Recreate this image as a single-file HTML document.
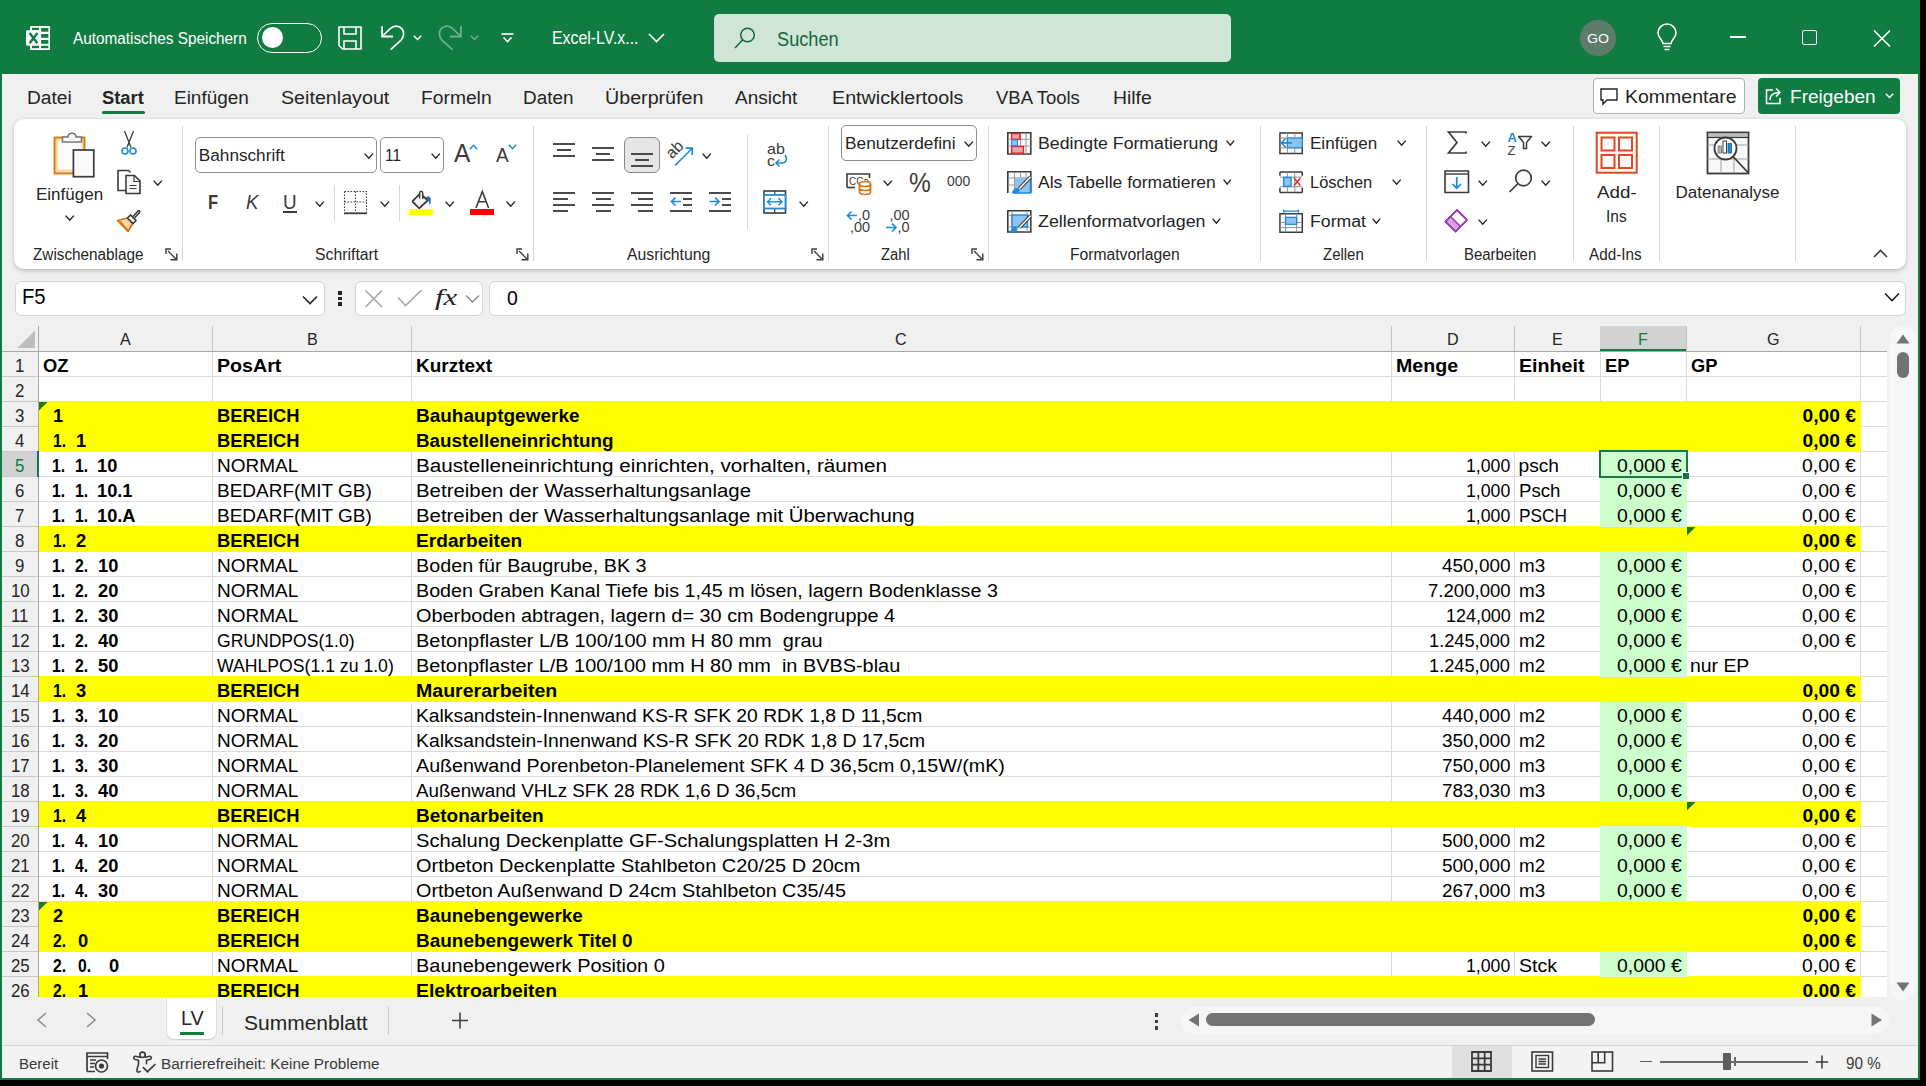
<!DOCTYPE html>
<html><head><meta charset="utf-8"><style>
html,body{margin:0;padding:0;}
body{width:1926px;height:1086px;position:relative;overflow:hidden;background:#000;font-family:"Liberation Sans",sans-serif;}
.t{position:absolute;line-height:1;white-space:pre;transform-origin:0 0;}
.a{position:absolute;}
svg{position:absolute;overflow:visible;}
</style></head><body>
<div class="a" style="left:0;top:0;width:1920px;height:1080px;background:#107C41"></div>
<div class="a" style="left:2px;top:74px;width:1916px;height:1004px;background:#F0F0F0"></div>
<svg style="left:25px;top:25px" width="26" height="26" viewBox="0 0 26 26">
<rect x="5" y="1" width="20" height="24" rx="1" fill="#fff"/>
<rect x="1" y="5.2" width="14.5" height="15.5" rx="1.2" fill="#fff"/>
<rect x="16.1" y="3" width="7.3" height="3.7" fill="#107C41"/><rect x="16.1" y="9" width="7.3" height="3.8" fill="#107C41"/>
<rect x="16.1" y="15" width="7.3" height="3.8" fill="#107C41"/><rect x="16.1" y="20.8" width="7.3" height="2.4" fill="#107C41"/>
<rect x="7" y="2.8" width="7" height="2.2" fill="#107C41"/><rect x="7" y="20.8" width="7" height="2.4" fill="#107C41"/>
<path d="M4.6 8l7.8 10.2M12.4 8L4.6 18.2" stroke="#107C41" stroke-width="2.4"/>
</svg>
<div class="t" style="left:73.30px;top:31.09px;font-size:15.6px;color:#fff;transform:scaleX(0.9823);">Automatisches Speichern</div>
<div class="a" style="left:257px;top:23px;width:63px;height:28px;border:1.2px solid #fff;border-radius:16px;box-sizing:content-box"></div>
<div class="a" style="left:262px;top:27px;width:21px;height:21px;border-radius:50%;background:#fff"></div>
<svg style="left:338px;top:26px" width="24" height="24" viewBox="0 0 24 24">
<path d="M1 1h22v22H4.5L1 19.5z" fill="none" stroke="#fff" stroke-width="1.6"/>
<path d="M6 1v7h12V1" fill="none" stroke="#fff" stroke-width="1.6"/>
<path d="M6 23v-8h12v8" fill="none" stroke="#fff" stroke-width="1.6"/>
</svg>
<svg style="left:381px;top:25px" width="24" height="26" viewBox="0 0 24 26">
<path d="M1.1 1.2v10.3H12" fill="none" stroke="#fff" stroke-width="1.8"/>
<path d="M2 10.5L9.6 3.4C12.5 0.6 17.5 0.2 20.8 3.6C23.5 6.5 23.3 12 19.8 15.4L9.6 24.7" fill="none" stroke="#fff" stroke-width="1.7"/>
</svg>
<svg style="left:413px;top:35px" width="9" height="6" viewBox="0 0 9 6"><path d="M0.8 0.8l3.7 3.7 3.7-3.7" fill="none" stroke="#fff" stroke-width="1.5"/></svg>
<svg style="left:438px;top:25px" width="24" height="26" viewBox="0 0 24 26" opacity="0.4">
<path d="M22.9 1.2v10.3H12" fill="none" stroke="#fff" stroke-width="1.8"/>
<path d="M22 10.5L14.4 3.4C11.5 0.6 6.5 0.2 3.2 3.6C0.5 6.5 0.7 12 4.2 15.4L14.4 24.7" fill="none" stroke="#fff" stroke-width="1.7"/>
</svg>
<svg style="left:470px;top:35px" width="9" height="6" viewBox="0 0 9 6" opacity="0.4"><path d="M0.8 0.8l3.7 3.7 3.7-3.7" fill="none" stroke="#fff" stroke-width="1.5"/></svg>
<svg style="left:501px;top:33px" width="13" height="11" viewBox="0 0 13 11"><path d="M0.5 1h12" stroke="#fff" stroke-width="1.6"/><path d="M2.5 4.5l4 4 4-4" fill="none" stroke="#fff" stroke-width="1.6"/></svg>
<div class="t" style="left:552.00px;top:30.23px;font-size:17.8px;color:#fff;transform:scaleX(0.8931);">Excel-LV.x...</div>
<svg style="left:648px;top:33px" width="17" height="10" viewBox="0 0 17 10"><path d="M1 1l7.5 7.5L16 1" fill="none" stroke="#fff" stroke-width="1.7"/></svg>
<div class="a" style="left:714px;top:14px;width:517px;height:48px;border-radius:5px;background:#D0E4D8"></div>
<svg style="left:734px;top:27px" width="22" height="22" viewBox="0 0 22 22"><circle cx="13.5" cy="8" r="6.8" fill="none" stroke="#13683A" stroke-width="1.5"/><path d="M8.7 12.8L1 21" stroke="#13683A" stroke-width="1.5"/></svg>
<div class="t" style="left:776.60px;top:29.69px;font-size:19.5px;color:#13683A;transform:scaleX(0.9329);">Suchen</div>
<div class="a" style="left:1580px;top:20px;width:36px;height:36px;border-radius:50%;background:#5E7C6A"></div>
<div class="t" style="left:1587.00px;top:32.07px;font-size:13.5px;color:#fff;transform:scaleX(1.0475);">GO</div>
<svg style="left:1657px;top:25px" width="20" height="26" viewBox="0 0 20 26">
<path d="M6 18.5c0-3-5-5.5-5-10.5a9 9 0 0 1 18 0c0 5-5 7.5-5 10.5z" fill="none" stroke="#fff" stroke-width="1.6"/>
<path d="M6.5 21.5h7M7.5 24.5h5" stroke="#fff" stroke-width="1.6"/>
</svg>
<div class="a" style="left:1730px;top:36px;width:16px;height:2px;background:#fff"></div>
<div class="a" style="left:1802px;top:30px;width:13px;height:13px;border:1.6px solid #fff;border-radius:2px"></div>
<svg style="left:1873px;top:30px" width="18" height="17" viewBox="0 0 18 17"><path d="M1 0.5l16 16M17 0.5l-16 16" stroke="#fff" stroke-width="1.6"/></svg>
<div class="t" style="left:26.70px;top:89.39px;font-size:18.8px;color:#242424;transform:scaleX(1.0218);">Datei</div>
<div class="t" style="left:102.20px;top:89.39px;font-size:18.8px;color:#242424;font-weight:bold;transform:scaleX(0.9769);">Start</div>
<div class="t" style="left:173.70px;top:89.39px;font-size:18.8px;color:#242424;transform:scaleX(1.0089);">Einfügen</div>
<div class="t" style="left:281.00px;top:89.39px;font-size:18.8px;color:#242424;transform:scaleX(1.0477);">Seitenlayout</div>
<div class="t" style="left:420.80px;top:89.39px;font-size:18.8px;color:#242424;transform:scaleX(1.0250);">Formeln</div>
<div class="t" style="left:523.00px;top:89.39px;font-size:18.8px;color:#242424;transform:scaleX(1.0056);">Daten</div>
<div class="t" style="left:605.20px;top:89.39px;font-size:18.8px;color:#242424;transform:scaleX(1.0472);">Überprüfen</div>
<div class="t" style="left:735.40px;top:89.39px;font-size:18.8px;color:#242424;transform:scaleX(1.0115);">Ansicht</div>
<div class="t" style="left:831.60px;top:89.39px;font-size:18.8px;color:#242424;transform:scaleX(1.0491);">Entwicklertools</div>
<div class="t" style="left:995.60px;top:89.39px;font-size:18.8px;color:#242424;transform:scaleX(0.9834);">VBA Tools</div>
<div class="t" style="left:1112.60px;top:89.39px;font-size:18.8px;color:#242424;transform:scaleX(1.0327);">Hilfe</div>
<div class="a" style="left:102px;top:111px;width:43px;height:3px;border-radius:2px;background:#107C41"></div>
<div class="a" style="left:1593px;top:78px;width:150px;height:34px;border:1px solid #B0B0B0;border-radius:4px;background:#fff"></div>
<svg style="left:1600px;top:88px" width="18" height="18" viewBox="0 0 18 18"><path d="M1 1h16v11H7l-4 4v-4H1z" fill="none" stroke="#242424" stroke-width="1.4"/></svg>
<div class="t" style="left:1625.00px;top:87.94px;font-size:18.5px;color:#242424;transform:scaleX(1.0547);">Kommentare</div>
<div class="a" style="left:1758px;top:78px;width:142px;height:36px;border-radius:4px;background:#107C41"></div>
<svg style="left:1765px;top:87px" width="18" height="18" viewBox="0 0 18 18">
<path d="M8 3H1.5v13.5H15V11" fill="none" stroke="#fff" stroke-width="1.5"/>
<path d="M5 13c0-5 4-7.5 9-7.5M11 1.5l4 4-4 4" fill="none" stroke="#fff" stroke-width="1.5"/>
</svg>
<div class="t" style="left:1789.80px;top:87.94px;font-size:18.5px;color:#fff;transform:scaleX(1.0288);">Freigeben</div>
<svg style="left:1885px;top:93px" width="9" height="6" viewBox="0 0 9 6"><path d="M0.8 0.8l3.7 3.7 3.7-3.7" fill="none" stroke="#fff" stroke-width="1.5"/></svg>
<div class="a" style="left:14px;top:119px;width:1892px;height:150px;border-radius:10px;background:#fff;box-shadow:0 1.5px 4px rgba(0,0,0,0.2)"></div>
<div class="t" style="left:33.30px;top:246.66px;font-size:16px;color:#262626;transform:scaleX(0.9557);">Zwischenablage</div>
<div class="t" style="left:314.60px;top:246.66px;font-size:16px;color:#262626;transform:scaleX(0.9873);">Schriftart</div>
<div class="t" style="left:627.40px;top:246.66px;font-size:16px;color:#262626;transform:scaleX(0.9859);">Ausrichtung</div>
<div class="t" style="left:881.40px;top:246.66px;font-size:16px;color:#262626;transform:scaleX(0.9221);">Zahl</div>
<div class="t" style="left:1069.60px;top:246.66px;font-size:16px;color:#262626;transform:scaleX(0.9791);">Formatvorlagen</div>
<div class="t" style="left:1322.50px;top:246.66px;font-size:16px;color:#262626;transform:scaleX(0.9340);">Zellen</div>
<div class="t" style="left:1464.00px;top:246.66px;font-size:16px;color:#262626;transform:scaleX(0.9329);">Bearbeiten</div>
<div class="t" style="left:1589.40px;top:246.66px;font-size:16px;color:#262626;transform:scaleX(0.9539);">Add-Ins</div>
<svg style="left:165px;top:248px" width="13" height="13" viewBox="0 0 13 13"><path d="M1 6V1h5" fill="none" stroke="#3B3B3B" stroke-width="1.4"/><path d="M3 3l8.5 8.5M5.5 11.8h6.3V5.5" fill="none" stroke="#3B3B3B" stroke-width="1.4"/></svg>
<svg style="left:516px;top:248px" width="13" height="13" viewBox="0 0 13 13"><path d="M1 6V1h5" fill="none" stroke="#3B3B3B" stroke-width="1.4"/><path d="M3 3l8.5 8.5M5.5 11.8h6.3V5.5" fill="none" stroke="#3B3B3B" stroke-width="1.4"/></svg>
<svg style="left:811px;top:248px" width="13" height="13" viewBox="0 0 13 13"><path d="M1 6V1h5" fill="none" stroke="#3B3B3B" stroke-width="1.4"/><path d="M3 3l8.5 8.5M5.5 11.8h6.3V5.5" fill="none" stroke="#3B3B3B" stroke-width="1.4"/></svg>
<svg style="left:971px;top:248px" width="13" height="13" viewBox="0 0 13 13"><path d="M1 6V1h5" fill="none" stroke="#3B3B3B" stroke-width="1.4"/><path d="M3 3l8.5 8.5M5.5 11.8h6.3V5.5" fill="none" stroke="#3B3B3B" stroke-width="1.4"/></svg>
<div class="a" style="left:182px;top:126px;width:1px;height:135px;background:#D6D6D6"></div>
<div class="a" style="left:533px;top:126px;width:1px;height:135px;background:#D6D6D6"></div>
<div class="a" style="left:828px;top:126px;width:1px;height:135px;background:#D6D6D6"></div>
<div class="a" style="left:988px;top:126px;width:1px;height:135px;background:#D6D6D6"></div>
<div class="a" style="left:1260px;top:126px;width:1px;height:135px;background:#D6D6D6"></div>
<div class="a" style="left:1426px;top:126px;width:1px;height:135px;background:#D6D6D6"></div>
<div class="a" style="left:1573px;top:126px;width:1px;height:135px;background:#D6D6D6"></div>
<div class="a" style="left:1659px;top:126px;width:1px;height:135px;background:#D6D6D6"></div>
<div class="a" style="left:1795px;top:126px;width:1px;height:135px;background:#D6D6D6"></div>
<div class="a" style="left:334px;top:185px;width:1px;height:36px;background:#D6D6D6"></div>
<div class="a" style="left:399px;top:185px;width:1px;height:36px;background:#D6D6D6"></div>
<div class="a" style="left:747px;top:135px;width:1px;height:94px;background:#D6D6D6"></div>
<svg style="left:50px;top:130px" width="48" height="50" viewBox="0 0 48 50">
<rect x="4.5" y="7.5" width="30" height="36" fill="#F8D9A0" stroke="#D9730D" stroke-width="1.8"/>
<rect x="8" y="10.5" width="23.5" height="29" fill="#FBFBFB"/>
<path d="M12.5 12V7h5.5c0-5 8-5 8 0h5.5v5z" fill="#F7F7F7" stroke="#7A7A7A" stroke-width="1.6"/>
<rect x="23.4" y="20" width="20.4" height="26.7" fill="#FAFAFA" stroke="#3B3B3B" stroke-width="1.7"/>
</svg>
<div class="t" style="left:36.00px;top:186.41px;font-size:17px;color:#242424;">Einfügen</div>
<svg style="left:65.0px;top:214.5px" width="9.5" height="6.0" viewBox="0 0 9.5 6.0"><path d="M0.6 0.6L4.75 5.20L8.90 0.6" fill="none" stroke="#242424" stroke-width="1.4"/></svg>
<svg style="left:120px;top:130px" width="18" height="26" viewBox="0 0 18 26">
<path d="M4.5 1L11 17.5M13.5 1L7 17.5" stroke="#3B3B3B" stroke-width="1.3"/>
<circle cx="5" cy="21" r="3" fill="none" stroke="#1E8BDB" stroke-width="1.6"/><circle cx="13" cy="21" r="3" fill="none" stroke="#1E8BDB" stroke-width="1.6"/>
</svg>
<svg style="left:116px;top:169px" width="26" height="26" viewBox="0 0 26 26">
<path d="M10 21.5H2V1.5h10.5l2 2" fill="none" stroke="#3B3B3B" stroke-width="1.6"/>
<path d="M10 6.5h8.5l5.5 5.5v12.5H10z" fill="#FAFAFA" stroke="#3B3B3B" stroke-width="1.6"/>
<path d="M18 6.5v6h6M13.5 16.5h7M13.5 19.5h7" fill="none" stroke="#3B3B3B" stroke-width="1.2"/>
</svg>
<svg style="left:153.0px;top:179.5px" width="9.5" height="6.0" viewBox="0 0 9.5 6.0"><path d="M0.6 0.6L4.75 5.20L8.90 0.6" fill="none" stroke="#242424" stroke-width="1.4"/></svg>
<svg style="left:116px;top:208px" width="26" height="25" viewBox="0 0 26 25">
<path d="M1.5 12.5l10-2.5 5 5.5-4.5 8z" fill="#F9D7A6" stroke="#D9730D" stroke-width="1.7" stroke-linejoin="round"/>
<path d="M4 13.5l8 9" stroke="#D9730D" stroke-width="1.4"/>
<path d="M11.5 10l3-3 5.5 5.5-3 3z" fill="#fff" stroke="#3B3B3B" stroke-width="1.6"/>
<path d="M17 8.5l5-5.5c1-1 2.5 0.5 1.5 1.5l-5 5.5" fill="#fff" stroke="#3B3B3B" stroke-width="1.6"/>
</svg>
<div class="a" style="left:195px;top:137px;width:180px;height:34px;border:1px solid #8F8F8F;border-radius:5px;background:#fff"></div>
<div class="t" style="left:198.80px;top:147.24px;font-size:17.2px;color:#242424;">Bahnschrift</div>
<svg style="left:364.0px;top:152.5px" width="9.5" height="6.0" viewBox="0 0 9.5 6.0"><path d="M0.6 0.6L4.75 5.20L8.90 0.6" fill="none" stroke="#242424" stroke-width="1.4"/></svg>
<div class="a" style="left:380px;top:137px;width:62px;height:34px;border:1px solid #8F8F8F;border-radius:5px;background:#fff"></div>
<div class="t" style="left:384.70px;top:147.24px;font-size:17.2px;color:#242424;transform:scaleX(0.8912);">11</div>
<svg style="left:431.0px;top:152.5px" width="9.5" height="6.0" viewBox="0 0 9.5 6.0"><path d="M0.6 0.6L4.75 5.20L8.90 0.6" fill="none" stroke="#242424" stroke-width="1.4"/></svg>
<div class="t" style="left:454.40px;top:140.49px;font-size:26px;color:#3B3B3B;transform:scaleX(0.9399);">A</div>
<svg style="left:469px;top:144px" width="9" height="6" viewBox="0 0 9 6"><path d="M0.8 5.2L4.5 1.3l3.7 3.9" fill="none" stroke="#1E8BDB" stroke-width="1.6"/></svg>
<div class="t" style="left:495.90px;top:145.15px;font-size:20.5px;color:#3B3B3B;transform:scaleX(0.9288);">A</div>
<svg style="left:508px;top:144px" width="9" height="6" viewBox="0 0 9 6"><path d="M0.8 0.8L4.5 4.7l3.7-3.9" fill="none" stroke="#1E8BDB" stroke-width="1.6"/></svg>
<div class="t" style="left:207.80px;top:191.87px;font-size:20px;color:#3B3B3B;font-weight:bold;transform:scaleX(0.8267);">F</div>
<div class="t" style="left:245.80px;top:191.87px;font-size:20px;color:#3B3B3B;font-style:italic;transform:scaleX(0.9295);">K</div>
<div class="t" style="left:283.30px;top:191.87px;font-size:20px;color:#3B3B3B;transform:scaleX(0.9416);">U</div>
<div class="a" style="left:283px;top:211px;width:14px;height:1.5px;background:#3B3B3B"></div>
<svg style="left:314.8px;top:200.5px" width="9.5" height="6.0" viewBox="0 0 9.5 6.0"><path d="M0.6 0.6L4.75 5.20L8.90 0.6" fill="none" stroke="#242424" stroke-width="1.4"/></svg>
<svg style="left:343px;top:190px" width="25" height="25" viewBox="0 0 25 25">
<path d="M1.5 1.5h22v21M1.5 1.5v21M12.5 1.5v21M1.5 12h22" fill="none" stroke="#3B3B3B" stroke-width="1.1" stroke-dasharray="1.5 1.5"/>
<path d="M1 23.3h23" stroke="#3B3B3B" stroke-width="1.8"/>
</svg>
<svg style="left:380.0px;top:200.5px" width="9.5" height="6.0" viewBox="0 0 9.5 6.0"><path d="M0.6 0.6L4.75 5.20L8.90 0.6" fill="none" stroke="#242424" stroke-width="1.4"/></svg>
<svg style="left:408px;top:189px" width="26" height="27" viewBox="0 0 26 27">
<path d="M4.4 12.4L11.5 5.3M14.4 6.6L19.6 11.3L11.3 19.2L4.4 12.4" fill="#F5F5F5" stroke="#3B3B3B" stroke-width="1.6" stroke-linejoin="round"/>
<path d="M4.4 12.4L11.5 5.3L14.4 6.6L19.6 11.3L11.3 19.2z" fill="#F5F5F5"/>
<path d="M4.4 12.4L11.5 5.3M14.4 6.6L19.6 11.3L11.3 19.2L4.4 12.4" fill="none" stroke="#3B3B3B" stroke-width="1.6" stroke-linejoin="round"/>
<path d="M11.6 9.5V4c0-2.4 3.1-2.4 3.1 0v6" fill="none" stroke="#3B3B3B" stroke-width="1.5"/>
<path d="M17.8 8.2c2.8-2.3 5.2-0.5 5 3.2c-0.1 1.8-0.4 3.6-1 5.2c-0.3-2-0.6-3.6-1.6-5.2z" fill="#1E6FC2"/>
<rect x="1" y="20" width="24" height="6.2" fill="#FFFF00"/>
</svg>
<svg style="left:444.8px;top:200.5px" width="9.5" height="6.0" viewBox="0 0 9.5 6.0"><path d="M0.6 0.6L4.75 5.20L8.90 0.6" fill="none" stroke="#242424" stroke-width="1.4"/></svg>
<svg style="left:475px;top:190px" width="15" height="19" viewBox="0 0 15 19"><path d="M1 18L7.3 1.5L13.6 18M3.4 11.8H11.2" fill="none" stroke="#3B3B3B" stroke-width="1.6"/></svg>
<div class="a" style="left:470px;top:209px;width:24px;height:6px;background:#F00"></div>
<svg style="left:505.8px;top:200.5px" width="9.5" height="6.0" viewBox="0 0 9.5 6.0"><path d="M0.6 0.6L4.75 5.20L8.90 0.6" fill="none" stroke="#242424" stroke-width="1.4"/></svg>
<div class="a" style="left:553px;top:143px;width:22px;height:2px;background:#4A4A4A"></div><div class="a" style="left:557px;top:149px;width:14px;height:2px;background:#4A4A4A"></div><div class="a" style="left:553px;top:155px;width:22px;height:2px;background:#4A4A4A"></div>
<div class="a" style="left:592px;top:147px;width:22px;height:2px;background:#4A4A4A"></div><div class="a" style="left:596px;top:153px;width:14px;height:2px;background:#4A4A4A"></div><div class="a" style="left:592px;top:159px;width:22px;height:2px;background:#4A4A4A"></div>
<div class="a" style="left:624px;top:137px;width:34px;height:34px;border:1px solid #8A8A8A;border-radius:6px;background:#E6E6E6"></div>
<div class="a" style="left:631px;top:153px;width:22px;height:2px;background:#4A4A4A"></div><div class="a" style="left:635px;top:159px;width:14px;height:2px;background:#4A4A4A"></div><div class="a" style="left:631px;top:165px;width:22px;height:2px;background:#4A4A4A"></div>
<svg style="left:667px;top:141px" width="28" height="26" viewBox="0 0 28 26">
<text x="0" y="0" transform="translate(5 18.5) rotate(-45)" font-family="Liberation Sans" font-size="16" fill="#3B3B3B">ab</text>
<path d="M8 24.5L25 7.5M18.5 7.2h6.8v6.8" fill="none" stroke="#1E8BDB" stroke-width="1.7"/>
</svg>
<svg style="left:702.2px;top:152.8px" width="9.5" height="6.0" viewBox="0 0 9.5 6.0"><path d="M0.6 0.6L4.75 5.20L8.90 0.6" fill="none" stroke="#242424" stroke-width="1.4"/></svg>
<div class="a" style="left:553px;top:192px;width:22px;height:2px;background:#4A4A4A"></div><div class="a" style="left:553px;top:198px;width:15px;height:2px;background:#4A4A4A"></div><div class="a" style="left:553px;top:204px;width:22px;height:2px;background:#4A4A4A"></div><div class="a" style="left:553px;top:210px;width:15px;height:2px;background:#4A4A4A"></div>
<div class="a" style="left:592px;top:192px;width:22px;height:2px;background:#4A4A4A"></div><div class="a" style="left:596px;top:198px;width:15px;height:2px;background:#4A4A4A"></div><div class="a" style="left:592px;top:204px;width:22px;height:2px;background:#4A4A4A"></div><div class="a" style="left:596px;top:210px;width:15px;height:2px;background:#4A4A4A"></div>
<div class="a" style="left:631px;top:192px;width:22px;height:2px;background:#4A4A4A"></div><div class="a" style="left:638px;top:198px;width:15px;height:2px;background:#4A4A4A"></div><div class="a" style="left:631px;top:204px;width:22px;height:2px;background:#4A4A4A"></div><div class="a" style="left:638px;top:210px;width:15px;height:2px;background:#4A4A4A"></div>
<div class="a" style="left:670px;top:192px;width:22px;height:2px;background:#4A4A4A"></div><div class="a" style="left:683px;top:204px;width:9px;height:2px;background:#4A4A4A"></div><div class="a" style="left:670px;top:210px;width:22px;height:2px;background:#4A4A4A"></div>
<div class="a" style="left:683px;top:198px;width:9px;height:2px;background:#4A4A4A"></div>
<svg style="left:670px;top:196px" width="12" height="12" viewBox="0 0 12 12"><path d="M11 5.5H1.5M5.5 1.5L1.5 5.5l4 4" fill="none" stroke="#1E8BDB" stroke-width="1.7"/></svg>
<div class="a" style="left:709px;top:192px;width:22px;height:2px;background:#4A4A4A"></div><div class="a" style="left:722px;top:198px;width:9px;height:2px;background:#4A4A4A"></div><div class="a" style="left:722px;top:204px;width:9px;height:2px;background:#4A4A4A"></div><div class="a" style="left:709px;top:210px;width:22px;height:2px;background:#4A4A4A"></div>
<svg style="left:709px;top:196px" width="12" height="12" viewBox="0 0 12 12"><path d="M0.5 5.5H10M6 1.5l4 4-4 4" fill="none" stroke="#1E8BDB" stroke-width="1.7"/></svg>
<div class="t" style="left:766.70px;top:140.80px;font-size:15px;color:#3B3B3B;transform:scaleX(1.0728);">ab</div>
<div class="t" style="left:766.70px;top:153.30px;font-size:15px;color:#3B3B3B;transform:scaleX(1.0667);">c</div>
<svg style="left:774px;top:154px" width="14" height="14" viewBox="0 0 14 14"><path d="M11 1c3 4 1 8-3 8H2M5.5 5.5L2 9l3.5 3.5" fill="none" stroke="#1E8BDB" stroke-width="1.6"/></svg>
<svg style="left:763px;top:190px" width="24" height="25" viewBox="0 0 24 25">
<rect x="1" y="1" width="21.5" height="22" fill="none" stroke="#3B3B3B" stroke-width="1.6"/>
<path d="M11.75 1v22" stroke="#3B3B3B" stroke-width="1.2"/>
<rect x="1" y="5" width="21.5" height="13.5" fill="#fff" stroke="#1E8BDB" stroke-width="1.8"/>
<path d="M4.5 11.7h14.5M8 8.2l-3.5 3.5L8 15.2M15.5 8.2l3.5 3.5-3.5 3.5" fill="none" stroke="#1E8BDB" stroke-width="1.5"/>
</svg>
<svg style="left:799.4px;top:200.5px" width="9.5" height="6.0" viewBox="0 0 9.5 6.0"><path d="M0.6 0.6L4.75 5.20L8.90 0.6" fill="none" stroke="#242424" stroke-width="1.4"/></svg>
<div class="a" style="left:841px;top:125px;width:134px;height:34px;border:1px solid #8F8F8F;border-radius:5px;background:#fff"></div>
<div class="t" style="left:845.20px;top:135.31px;font-size:17px;color:#242424;transform:scaleX(1.0167);">Benutzerdefini</div>
<svg style="left:963.7px;top:140.5px" width="9.5" height="6.0" viewBox="0 0 9.5 6.0"><path d="M0.6 0.6L4.75 5.20L8.90 0.6" fill="none" stroke="#242424" stroke-width="1.4"/></svg>
<svg style="left:846px;top:173px" width="27" height="22" viewBox="0 0 27 22">
<path d="M1 14.5V1h22.5v4" fill="none" stroke="#3B3B3B" stroke-width="1.6"/><path d="M1 14.5h8" stroke="#3B3B3B" stroke-width="1.6"/>
<text x="3" y="12" font-family="Liberation Sans" font-size="10" fill="#3B3B3B">CCa</text>
<ellipse cx="19" cy="11" rx="5.5" ry="2.5" fill="#fff" stroke="#D9730D" stroke-width="1.7"/>
<path d="M13.5 11v8c0 3.3 11 3.3 11 0v-8M13.5 15c0 3.3 11 3.3 11 0" fill="none" stroke="#D9730D" stroke-width="1.7"/>
</svg>
<svg style="left:883.2px;top:180.0px" width="9.5" height="6.0" viewBox="0 0 9.5 6.0"><path d="M0.6 0.6L4.75 5.20L8.90 0.6" fill="none" stroke="#242424" stroke-width="1.4"/></svg>
<div class="t" style="left:909.00px;top:169.20px;font-size:28px;color:#3B3B3B;transform:scaleX(0.8756);">%</div>
<div class="t" style="left:947.10px;top:174.43px;font-size:14.5px;color:#3B3B3B;transform:scaleX(0.9548);">000</div>
<svg style="left:845px;top:208px" width="28" height="26" viewBox="0 0 28 26">
<path d="M12 7.5H2.5M6.5 3.5l-4 4 4 4" fill="none" stroke="#1E8BDB" stroke-width="1.7"/>
<text x="13" y="11.5" font-family="Liberation Sans" font-size="14.5" fill="#3B3B3B">,0</text>
<text x="5" y="23.5" font-family="Liberation Sans" font-size="14.5" fill="#3B3B3B">,00</text>
</svg>
<svg style="left:885px;top:208px" width="28" height="26" viewBox="0 0 28 26">
<text x="4.5" y="11.5" font-family="Liberation Sans" font-size="14.5" fill="#3B3B3B">,00</text>
<path d="M1 19.5h10M7 15.5l4 4-4 4" fill="none" stroke="#1E8BDB" stroke-width="1.7"/>
<text x="12.5" y="23.5" font-family="Liberation Sans" font-size="14.5" fill="#3B3B3B">,0</text>
</svg>
<svg style="left:1007px;top:132px" width="25" height="23" viewBox="0 0 25 23">
<path d="M0.8 0.8h23v21.2H0.8z" fill="#FAFAFA" stroke="#3B3B3B" stroke-width="1.6"/>
<path d="M7.5 1v21M13.5 1v21M19 1v21M1 7.3h23M1 14h23" stroke="#9A9A9A" stroke-width="1"/>
<rect x="4.6" y="1.5" width="8.4" height="5.8" fill="#F5A0A8" stroke="#E02020" stroke-width="1.3"/>
<rect x="4.6" y="14.5" width="11.9" height="6.6" fill="#F5A0A8" stroke="#E02020" stroke-width="1.3"/>
<rect x="4.6" y="7.8" width="5.9" height="6" fill="#8EC3F0" stroke="#1E8BDB" stroke-width="1.1"/>
</svg>
<svg style="left:1007px;top:171px" width="25" height="24" viewBox="0 0 25 24">
<path d="M0.8 22V0.8h23v21" fill="#FAFAFA" stroke="#3B3B3B" stroke-width="1.6"/>
<path d="M7.5 1v21M13.5 1v6M19 1v6M1 7h23M1 14h7" stroke="#9A9A9A" stroke-width="1"/>
<rect x="8" y="6.5" width="15.5" height="15.5" fill="#8EC3F0"/><path d="M8 22h15.5V6.5" fill="none" stroke="#1E8BDB" stroke-width="1.6"/>
<path d="M23.5 6L12.5 17.5" stroke="#3B3B3B" stroke-width="3.6"/><path d="M23.5 6L12.5 17.5" stroke="#fff" stroke-width="1.6"/>
<path d="M5 22.5c0-3 2.5-5.5 5.5-5.5 1.5 0.5 2 1.5 2 2.5-1 2.5-4 3.5-7.5 3z" fill="#1E8BDB"/>
</svg>
<svg style="left:1007px;top:210px" width="25" height="24" viewBox="0 0 25 24">
<path d="M0.8 0.8h23v21.2H0.8z" fill="#FAFAFA" stroke="#3B3B3B" stroke-width="1.6"/>
<path d="M5 1v21M20 1v21M1 5.5h23M1 17h23" stroke="#9A9A9A" stroke-width="1"/>
<rect x="5" y="5" width="15.5" height="12" fill="#8EC3F0" stroke="#1E8BDB" stroke-width="1.4"/>
<path d="M23.5 6L12.5 17.5" stroke="#3B3B3B" stroke-width="3.6"/><path d="M23.5 6L12.5 17.5" stroke="#fff" stroke-width="1.6"/>
<path d="M3 22.5c0-3 2.5-5.5 5.5-5.5 1.5 0.5 2 1.5 2 2.5-1 2.5-4 3.5-7.5 3z" fill="#1E8BDB"/>
</svg>
<div class="t" style="left:1037.70px;top:135.16px;font-size:17.3px;color:#242424;transform:scaleX(1.0245);">Bedingte Formatierung</div>
<svg style="left:1225.5px;top:140.0px" width="8.7" height="6.0" viewBox="0 0 8.7 6.0"><path d="M0.6 0.6L4.35 5.20L8.10 0.6" fill="none" stroke="#242424" stroke-width="1.4"/></svg>
<div class="t" style="left:1037.70px;top:174.06px;font-size:17.3px;color:#242424;transform:scaleX(1.0127);">Als Tabelle formatieren</div>
<svg style="left:1222.7px;top:179.0px" width="8.3" height="6.0" viewBox="0 0 8.3 6.0"><path d="M0.6 0.6L4.15 5.20L7.70 0.6" fill="none" stroke="#242424" stroke-width="1.4"/></svg>
<div class="t" style="left:1037.70px;top:212.96px;font-size:17.3px;color:#242424;transform:scaleX(1.0318);">Zellenformatvorlagen</div>
<svg style="left:1212.2px;top:218.0px" width="8.8" height="6.0" viewBox="0 0 8.8 6.0"><path d="M0.6 0.6L4.40 5.20L8.20 0.6" fill="none" stroke="#242424" stroke-width="1.4"/></svg>
<svg style="left:1279px;top:132px;transform:scale(0.93);transform-origin:0 0" width="26" height="24" viewBox="0 0 26 24">
<path d="M1 1h24v22H1z" fill="#fff" stroke="#3B3B3B" stroke-width="1.6"/>
<path d="M9 1v22M17 1v22M1 6.5h24M1 17h24" stroke="#8A8A8A" stroke-width="1"/>
<rect x="9" y="6.5" width="16" height="10.5" fill="#8EC3F0" stroke="#1E8BDB" stroke-width="1.3"/>
<path d="M14 11.7H2.5M7 7l-4.5 4.7L7 16.4" fill="none" stroke="#1E8BDB" stroke-width="1.7"/>
</svg>
<svg style="left:1279px;top:171px;transform:scale(0.93);transform-origin:0 0" width="26" height="24" viewBox="0 0 26 24">
<path d="M1 1h24M1 23h24M1 1v4M1 18v5M25 1v4M25 18v5" fill="none" stroke="#3B3B3B" stroke-width="1.6"/>
<path d="M9 1v22M17 1v22M1 6.5h24M1 17h24" stroke="#8A8A8A" stroke-width="1"/>
<rect x="5" y="7" width="8" height="9.5" fill="#8EC3F0" stroke="#1E8BDB" stroke-width="1.5"/>
<path d="M16 7.5l7 8M23 7.5l-7 8" stroke="#E03030" stroke-width="1.7"/>
</svg>
<svg style="left:1279px;top:209px;transform:scale(0.93);transform-origin:0 0" width="26" height="26" viewBox="0 0 26 26">
<path d="M1 5h24v20H1z" fill="#fff" stroke="#3B3B3B" stroke-width="1.6"/>
<path d="M7 5v20M19 5v20M1 14.5h24M1 20h24" stroke="#8A8A8A" stroke-width="1"/>
<rect x="7" y="9" width="12" height="7.5" fill="#8EC3F0" stroke="#1E8BDB" stroke-width="1.4"/>
<path d="M5 2.2h16M5 0.5v3.5M21 0.5v3.5" stroke="#1E8BDB" stroke-width="1.4"/>
</svg>
<div class="t" style="left:1310.00px;top:135.16px;font-size:17.3px;color:#242424;transform:scaleX(0.9865);">Einfügen</div>
<svg style="left:1397.0px;top:140.0px" width="9.3" height="6.0" viewBox="0 0 9.3 6.0"><path d="M0.6 0.6L4.65 5.20L8.70 0.6" fill="none" stroke="#242424" stroke-width="1.4"/></svg>
<div class="t" style="left:1310.00px;top:174.06px;font-size:17.3px;color:#242424;transform:scaleX(0.9520);">Löschen</div>
<svg style="left:1392.2px;top:179.0px" width="9.3" height="6.0" viewBox="0 0 9.3 6.0"><path d="M0.6 0.6L4.65 5.20L8.70 0.6" fill="none" stroke="#242424" stroke-width="1.4"/></svg>
<div class="t" style="left:1310.00px;top:212.96px;font-size:17.3px;color:#242424;transform:scaleX(1.0232);">Format</div>
<svg style="left:1372.2px;top:218.0px" width="8.8" height="6.0" viewBox="0 0 8.8 6.0"><path d="M0.6 0.6L4.40 5.20L8.20 0.6" fill="none" stroke="#242424" stroke-width="1.4"/></svg>
<svg style="left:1447px;top:131px" width="21" height="24" viewBox="0 0 21 24"><path d="M19 2.5V1H1.5l8.5 10.5L1.5 22H19v-1.5" fill="none" stroke="#3B3B3B" stroke-width="1.7"/></svg>
<svg style="left:1481.0px;top:140.6px" width="9.5" height="6.0" viewBox="0 0 9.5 6.0"><path d="M0.6 0.6L4.75 5.20L8.90 0.6" fill="none" stroke="#242424" stroke-width="1.4"/></svg>
<svg style="left:1507px;top:130px" width="27" height="27" viewBox="0 0 27 27">
<text x="0.5" y="12" font-family="Liberation Sans" font-weight="bold" font-size="13" fill="#1E8BDB">A</text>
<text x="0.5" y="25" font-family="Liberation Sans" font-size="13" fill="#3B3B3B">Z</text>
<path d="M11.5 6.5h13l-5 6v6h-3v-6z" fill="#fff" stroke="#3B3B3B" stroke-width="1.5" stroke-linejoin="round"/>
</svg>
<svg style="left:1541.0px;top:140.6px" width="9.5" height="6.0" viewBox="0 0 9.5 6.0"><path d="M0.6 0.6L4.75 5.20L8.90 0.6" fill="none" stroke="#242424" stroke-width="1.4"/></svg>
<svg style="left:1444px;top:170px" width="26" height="24" viewBox="0 0 26 24">
<path d="M1 1h23.5v21.5H1z" fill="#FAFAFA" stroke="#3B3B3B" stroke-width="1.6"/><path d="M1 4h23.5" stroke="#3B3B3B" stroke-width="1.4"/>
<path d="M12.75 7v11M8.5 14l4.25 4.25L17 14" fill="none" stroke="#1E8BDB" stroke-width="1.7"/>
</svg>
<svg style="left:1478.2px;top:180.0px" width="9.5" height="6.0" viewBox="0 0 9.5 6.0"><path d="M0.6 0.6L4.75 5.20L8.90 0.6" fill="none" stroke="#242424" stroke-width="1.4"/></svg>
<svg style="left:1508px;top:169px" width="25" height="25" viewBox="0 0 25 25"><circle cx="15.5" cy="9" r="7.8" fill="#FAFAFA" stroke="#3B3B3B" stroke-width="1.7"/><path d="M10 14.5L1.5 23" stroke="#3B3B3B" stroke-width="1.7"/></svg>
<svg style="left:1541.0px;top:180.0px" width="9.5" height="6.0" viewBox="0 0 9.5 6.0"><path d="M0.6 0.6L4.75 5.20L8.90 0.6" fill="none" stroke="#242424" stroke-width="1.4"/></svg>
<svg style="left:1444px;top:208px" width="25" height="26" viewBox="0 0 25 26">
<path d="M13 2l10 10-11.5 11.5-10-10z" fill="#fff" stroke="#9B3BB5" stroke-width="1.7" stroke-linejoin="round"/>
<path d="M1.5 13.5l5-5 10 10-5 5z" fill="#D9A4E5" stroke="#9B3BB5" stroke-width="1.5"/>
<path d="M13 2l10 10-11.5 11.5-10-10z" fill="none" stroke="#9B3BB5" stroke-width="1.7" stroke-linejoin="round"/>
</svg>
<svg style="left:1478.0px;top:218.5px" width="9.5" height="6.0" viewBox="0 0 9.5 6.0"><path d="M0.6 0.6L4.75 5.20L8.90 0.6" fill="none" stroke="#242424" stroke-width="1.4"/></svg>
<svg style="left:1595px;top:131px" width="44" height="44" viewBox="0 0 44 44">
<rect x="1.7" y="1.7" width="40" height="40" fill="none" stroke="#E2461E" stroke-width="2"/>
<rect x="6.5" y="6.5" width="13" height="13" fill="none" stroke="#E2461E" stroke-width="2"/>
<rect x="24" y="6.5" width="13" height="13" fill="none" stroke="#E2461E" stroke-width="2"/>
<rect x="6.5" y="24" width="13" height="13" fill="none" stroke="#E2461E" stroke-width="2"/>
<rect x="24" y="24" width="13" height="13" fill="none" stroke="#E2461E" stroke-width="2"/>
</svg>
<div class="t" style="left:1596.50px;top:184.01px;font-size:17px;color:#242424;transform:scaleX(1.1056);">Add-</div>
<div class="t" style="left:1606.20px;top:207.91px;font-size:17px;color:#242424;transform:scaleX(0.9084);">Ins</div>
<svg style="left:1706px;top:131px" width="44" height="44" viewBox="0 0 44 44">
<rect x="1.5" y="1.5" width="41" height="41" fill="#F8F8F8" stroke="#3B3B3B" stroke-width="1.8"/>
<rect x="1.5" y="1.5" width="41" height="5" fill="#BDBDBD" stroke="#3B3B3B" stroke-width="1.2"/>
<path d="M1.5 14h41M1.5 28h41M15 28v14M28 28v14" stroke="#A0A0A0" stroke-width="1"/>
<circle cx="19.5" cy="17.5" r="11" fill="#fff" stroke="#3B3B3B" stroke-width="1.8"/>
<path d="M27 25.5L42 41.5" stroke="#3B3B3B" stroke-width="1.8"/>
<rect x="12" y="15" width="3.5" height="7" fill="#B0B0B0" stroke="#777" stroke-width="0.8"/>
<rect x="17" y="10" width="3.5" height="12" fill="#fff" stroke="#3B3B3B" stroke-width="1"/>
<rect x="22" y="12.5" width="3.5" height="9.5" fill="#1E8BDB" stroke="#1060A0" stroke-width="0.8"/>
</svg>
<div class="t" style="left:1675.60px;top:184.01px;font-size:17px;color:#242424;">Datenanalyse</div>
<svg style="left:1873px;top:249px" width="15" height="9" viewBox="0 0 15 9"><path d="M1 8l6.5-6.5L14 8" fill="none" stroke="#3B3B3B" stroke-width="1.6"/></svg>
<div class="a" style="left:15px;top:281px;width:310px;height:35px;border:1px solid #D4D4D4;border-radius:6px;background:#fff;box-sizing:border-box"></div>
<div class="t" style="left:21.60px;top:286.80px;font-size:21.5px;color:#000;transform:scaleX(0.9406);">F5</div>
<svg style="left:302px;top:295px" width="16" height="10" viewBox="0 0 16 10"><path d="M1 1.5l7 7 7-7" fill="none" stroke="#242424" stroke-width="1.6"/></svg>
<div class="a" style="left:338px;top:291px;width:4px;height:3.5px;background:#242424"></div><div class="a" style="left:338px;top:296.8px;width:4px;height:3.5px;background:#242424"></div><div class="a" style="left:338px;top:302.3px;width:4px;height:3.5px;background:#242424"></div>
<div class="a" style="left:355px;top:281px;width:128px;height:35px;border:1px solid #D4D4D4;border-radius:6px;background:#fff;box-sizing:border-box"></div>
<svg style="left:364px;top:289px" width="20" height="20" viewBox="0 0 20 20"><path d="M1.5 1.5l16.5 16.5M18 1.5L1.5 18" stroke="#A6A6A6" stroke-width="1.6"/></svg>
<svg style="left:397px;top:289px" width="26" height="18" viewBox="0 0 26 18"><path d="M1 8.5l7.5 8L24.5 1" fill="none" stroke="#A6A6A6" stroke-width="1.6"/></svg>
<div class="t" style="left:434.70px;top:284.68px;font-size:24px;color:#242424;font-style:italic;font-family:'Liberation Serif',serif;transform:scaleX(1.2760);">fx</div>
<svg style="left:465px;top:294px" width="15" height="10" viewBox="0 0 15 10"><path d="M1 1.5l6.5 6.5L14 1.5" fill="none" stroke="#8A8A8A" stroke-width="1.4"/></svg>
<div class="a" style="left:489px;top:281px;width:1417px;height:35px;border:1px solid #D4D4D4;border-radius:6px;background:#fff;box-sizing:border-box"></div>
<div class="t" style="left:506.70px;top:288.35px;font-size:20.5px;color:#000;transform:scaleX(0.9473);">0</div>
<svg style="left:1884px;top:292px" width="16" height="10" viewBox="0 0 16 10"><path d="M1 1.5l7 7 7-7" fill="none" stroke="#242424" stroke-width="1.6"/></svg>
<div class="a" style="left:39px;top:352px;width:1848px;height:645px;background:#fff"></div>
<svg style="left:17px;top:330px" width="19" height="19" viewBox="0 0 19 19"><path d="M18 0.5V18H0.5z" fill="#BDBDBD"/></svg>
<div class="a" style="left:212px;top:326px;width:1px;height:25px;background:#C4C4C4"></div>
<div class="a" style="left:411px;top:326px;width:1px;height:25px;background:#C4C4C4"></div>
<div class="a" style="left:1391px;top:326px;width:1px;height:25px;background:#C4C4C4"></div>
<div class="a" style="left:1514px;top:326px;width:1px;height:25px;background:#C4C4C4"></div>
<div class="a" style="left:1600px;top:326px;width:1px;height:25px;background:#C4C4C4"></div>
<div class="a" style="left:1686px;top:326px;width:1px;height:25px;background:#C4C4C4"></div>
<div class="a" style="left:1860px;top:326px;width:1px;height:25px;background:#C4C4C4"></div>
<div class="a" style="left:38px;top:326px;width:1px;height:671px;background:#A8A8A8"></div>
<div class="a" style="left:1600px;top:326px;width:86px;height:25px;background:#D2D2D2"></div>
<div class="a" style="left:1600px;top:349px;width:86px;height:2px;background:#107C41"></div>
<div class="a" style="left:2px;top:351px;width:1885px;height:1px;background:#A8A8A8"></div>
<div class="a" style="left:2px;top:376px;width:36px;height:1px;background:#C8C8C8"></div><div class="a" style="left:39px;top:376px;width:1848px;height:1px;background:#DADADA"></div><div class="a" style="left:2px;top:401px;width:36px;height:1px;background:#C8C8C8"></div><div class="a" style="left:39px;top:401px;width:1848px;height:1px;background:#DADADA"></div><div class="a" style="left:2px;top:426px;width:36px;height:1px;background:#C8C8C8"></div><div class="a" style="left:39px;top:426px;width:1848px;height:1px;background:#DADADA"></div><div class="a" style="left:2px;top:451px;width:36px;height:1px;background:#C8C8C8"></div><div class="a" style="left:39px;top:451px;width:1848px;height:1px;background:#DADADA"></div><div class="a" style="left:2px;top:476px;width:36px;height:1px;background:#C8C8C8"></div><div class="a" style="left:39px;top:476px;width:1848px;height:1px;background:#DADADA"></div><div class="a" style="left:2px;top:501px;width:36px;height:1px;background:#C8C8C8"></div><div class="a" style="left:39px;top:501px;width:1848px;height:1px;background:#DADADA"></div><div class="a" style="left:2px;top:526px;width:36px;height:1px;background:#C8C8C8"></div><div class="a" style="left:39px;top:526px;width:1848px;height:1px;background:#DADADA"></div><div class="a" style="left:2px;top:551px;width:36px;height:1px;background:#C8C8C8"></div><div class="a" style="left:39px;top:551px;width:1848px;height:1px;background:#DADADA"></div><div class="a" style="left:2px;top:576px;width:36px;height:1px;background:#C8C8C8"></div><div class="a" style="left:39px;top:576px;width:1848px;height:1px;background:#DADADA"></div><div class="a" style="left:2px;top:601px;width:36px;height:1px;background:#C8C8C8"></div><div class="a" style="left:39px;top:601px;width:1848px;height:1px;background:#DADADA"></div><div class="a" style="left:2px;top:626px;width:36px;height:1px;background:#C8C8C8"></div><div class="a" style="left:39px;top:626px;width:1848px;height:1px;background:#DADADA"></div><div class="a" style="left:2px;top:651px;width:36px;height:1px;background:#C8C8C8"></div><div class="a" style="left:39px;top:651px;width:1848px;height:1px;background:#DADADA"></div><div class="a" style="left:2px;top:676px;width:36px;height:1px;background:#C8C8C8"></div><div class="a" style="left:39px;top:676px;width:1848px;height:1px;background:#DADADA"></div><div class="a" style="left:2px;top:701px;width:36px;height:1px;background:#C8C8C8"></div><div class="a" style="left:39px;top:701px;width:1848px;height:1px;background:#DADADA"></div><div class="a" style="left:2px;top:726px;width:36px;height:1px;background:#C8C8C8"></div><div class="a" style="left:39px;top:726px;width:1848px;height:1px;background:#DADADA"></div><div class="a" style="left:2px;top:751px;width:36px;height:1px;background:#C8C8C8"></div><div class="a" style="left:39px;top:751px;width:1848px;height:1px;background:#DADADA"></div><div class="a" style="left:2px;top:776px;width:36px;height:1px;background:#C8C8C8"></div><div class="a" style="left:39px;top:776px;width:1848px;height:1px;background:#DADADA"></div><div class="a" style="left:2px;top:801px;width:36px;height:1px;background:#C8C8C8"></div><div class="a" style="left:39px;top:801px;width:1848px;height:1px;background:#DADADA"></div><div class="a" style="left:2px;top:826px;width:36px;height:1px;background:#C8C8C8"></div><div class="a" style="left:39px;top:826px;width:1848px;height:1px;background:#DADADA"></div><div class="a" style="left:2px;top:851px;width:36px;height:1px;background:#C8C8C8"></div><div class="a" style="left:39px;top:851px;width:1848px;height:1px;background:#DADADA"></div><div class="a" style="left:2px;top:876px;width:36px;height:1px;background:#C8C8C8"></div><div class="a" style="left:39px;top:876px;width:1848px;height:1px;background:#DADADA"></div><div class="a" style="left:2px;top:901px;width:36px;height:1px;background:#C8C8C8"></div><div class="a" style="left:39px;top:901px;width:1848px;height:1px;background:#DADADA"></div><div class="a" style="left:2px;top:926px;width:36px;height:1px;background:#C8C8C8"></div><div class="a" style="left:39px;top:926px;width:1848px;height:1px;background:#DADADA"></div><div class="a" style="left:2px;top:951px;width:36px;height:1px;background:#C8C8C8"></div><div class="a" style="left:39px;top:951px;width:1848px;height:1px;background:#DADADA"></div><div class="a" style="left:2px;top:976px;width:36px;height:1px;background:#C8C8C8"></div><div class="a" style="left:39px;top:976px;width:1848px;height:1px;background:#DADADA"></div>
<div class="a" style="left:212px;top:352px;width:1px;height:645px;background:#DADADA"></div><div class="a" style="left:411px;top:352px;width:1px;height:645px;background:#DADADA"></div><div class="a" style="left:1391px;top:352px;width:1px;height:645px;background:#DADADA"></div><div class="a" style="left:1514px;top:352px;width:1px;height:645px;background:#DADADA"></div><div class="a" style="left:1600px;top:352px;width:1px;height:645px;background:#DADADA"></div><div class="a" style="left:1686px;top:352px;width:1px;height:645px;background:#DADADA"></div><div class="a" style="left:1860px;top:352px;width:1px;height:645px;background:#DADADA"></div>
<div class="a" style="left:2px;top:452px;width:35px;height:24px;background:#D2D2D2"></div>
<div class="a" style="left:37px;top:451px;width:2px;height:26px;background:#107C41"></div>
<div class="a" style="left:39px;top:401px;width:1822px;height:26px;background:#FFFF00"></div><div class="a" style="left:39px;top:426px;width:1822px;height:26px;background:#FFFF00"></div><div class="a" style="left:39px;top:526px;width:1822px;height:26px;background:#FFFF00"></div><div class="a" style="left:39px;top:676px;width:1822px;height:26px;background:#FFFF00"></div><div class="a" style="left:39px;top:801px;width:1822px;height:26px;background:#FFFF00"></div><div class="a" style="left:39px;top:901px;width:1822px;height:26px;background:#FFFF00"></div><div class="a" style="left:39px;top:926px;width:1822px;height:26px;background:#FFFF00"></div><div class="a" style="left:39px;top:976px;width:1822px;height:21px;background:#FFFF00"></div><div class="a" style="left:1600px;top:451px;width:87px;height:26px;background:#CCFFCC"></div><div class="a" style="left:1600px;top:476px;width:87px;height:26px;background:#CCFFCC"></div><div class="a" style="left:1600px;top:501px;width:87px;height:26px;background:#CCFFCC"></div><div class="a" style="left:1600px;top:551px;width:87px;height:26px;background:#CCFFCC"></div><div class="a" style="left:1600px;top:576px;width:87px;height:26px;background:#CCFFCC"></div><div class="a" style="left:1600px;top:601px;width:87px;height:26px;background:#CCFFCC"></div><div class="a" style="left:1600px;top:626px;width:87px;height:26px;background:#CCFFCC"></div><div class="a" style="left:1600px;top:651px;width:87px;height:26px;background:#CCFFCC"></div><div class="a" style="left:1600px;top:701px;width:87px;height:26px;background:#CCFFCC"></div><div class="a" style="left:1600px;top:726px;width:87px;height:26px;background:#CCFFCC"></div><div class="a" style="left:1600px;top:751px;width:87px;height:26px;background:#CCFFCC"></div><div class="a" style="left:1600px;top:776px;width:87px;height:26px;background:#CCFFCC"></div><div class="a" style="left:1600px;top:826px;width:87px;height:26px;background:#CCFFCC"></div><div class="a" style="left:1600px;top:851px;width:87px;height:26px;background:#CCFFCC"></div><div class="a" style="left:1600px;top:876px;width:87px;height:26px;background:#CCFFCC"></div><div class="a" style="left:1600px;top:951px;width:87px;height:26px;background:#CCFFCC"></div>
<svg style="left:39px;top:402px" width="9" height="9" viewBox="0 0 9 9"><path d="M0 0h8.5L0 8.5z" fill="#1D7A1D"/></svg>
<svg style="left:1687px;top:527px" width="9" height="9" viewBox="0 0 9 9"><path d="M0 0h8.5L0 8.5z" fill="#1D7A1D"/></svg>
<svg style="left:1687px;top:802px" width="9" height="9" viewBox="0 0 9 9"><path d="M0 0h8.5L0 8.5z" fill="#1D7A1D"/></svg>
<svg style="left:39px;top:902px" width="9" height="9" viewBox="0 0 9 9"><path d="M0 0h8.5L0 8.5z" fill="#1D7A1D"/></svg>
<div class="a" style="left:1599px;top:450px;width:89px;height:28px;border:2px solid #107C41;box-sizing:border-box"></div>
<div class="a" style="left:1682px;top:472px;width:8px;height:8px;background:#fff"></div><div class="a" style="left:1683px;top:473px;width:6px;height:6px;background:#107C41"></div>
<div class="t" style="left:120.11px;top:331.31px;font-size:17px;color:#262626;transform:scaleX(0.9500);">A</div>
<div class="t" style="left:307.31px;top:331.31px;font-size:17px;color:#262626;transform:scaleX(0.9500);">B</div>
<div class="t" style="left:895.17px;top:331.31px;font-size:17px;color:#262626;transform:scaleX(0.9500);">C</div>
<div class="t" style="left:1446.67px;top:331.31px;font-size:17px;color:#262626;transform:scaleX(0.9500);">D</div>
<div class="t" style="left:1551.61px;top:331.31px;font-size:17px;color:#262626;transform:scaleX(0.9500);">E</div>
<div class="t" style="left:1638.07px;top:331.31px;font-size:17px;color:#107C41;transform:scaleX(0.9500);">F</div>
<div class="t" style="left:1767.22px;top:331.31px;font-size:17px;color:#262626;transform:scaleX(0.9500);">G</div>
<div class="t" style="left:15.32px;top:357.01px;font-size:18.3px;color:#262626;transform:scaleX(0.9200);">1</div>
<div class="t" style="left:15.32px;top:382.01px;font-size:18.3px;color:#262626;transform:scaleX(0.9200);">2</div>
<div class="t" style="left:15.32px;top:407.01px;font-size:18.3px;color:#262626;transform:scaleX(0.9200);">3</div>
<div class="t" style="left:15.32px;top:432.01px;font-size:18.3px;color:#262626;transform:scaleX(0.9200);">4</div>
<div class="t" style="left:15.32px;top:457.01px;font-size:18.3px;color:#107C41;transform:scaleX(0.9200);">5</div>
<div class="t" style="left:15.32px;top:482.01px;font-size:18.3px;color:#262626;transform:scaleX(0.9200);">6</div>
<div class="t" style="left:15.32px;top:507.01px;font-size:18.3px;color:#262626;transform:scaleX(0.9200);">7</div>
<div class="t" style="left:15.32px;top:532.01px;font-size:18.3px;color:#262626;transform:scaleX(0.9200);">8</div>
<div class="t" style="left:15.32px;top:557.01px;font-size:18.3px;color:#262626;transform:scaleX(0.9200);">9</div>
<div class="t" style="left:10.65px;top:582.01px;font-size:18.3px;color:#262626;transform:scaleX(0.9200);">10</div>
<div class="t" style="left:11.27px;top:607.01px;font-size:18.3px;color:#262626;transform:scaleX(0.9200);">11</div>
<div class="t" style="left:10.65px;top:632.01px;font-size:18.3px;color:#262626;transform:scaleX(0.9200);">12</div>
<div class="t" style="left:10.65px;top:657.01px;font-size:18.3px;color:#262626;transform:scaleX(0.9200);">13</div>
<div class="t" style="left:10.65px;top:682.01px;font-size:18.3px;color:#262626;transform:scaleX(0.9200);">14</div>
<div class="t" style="left:10.65px;top:707.01px;font-size:18.3px;color:#262626;transform:scaleX(0.9200);">15</div>
<div class="t" style="left:10.65px;top:732.01px;font-size:18.3px;color:#262626;transform:scaleX(0.9200);">16</div>
<div class="t" style="left:10.65px;top:757.01px;font-size:18.3px;color:#262626;transform:scaleX(0.9200);">17</div>
<div class="t" style="left:10.65px;top:782.01px;font-size:18.3px;color:#262626;transform:scaleX(0.9200);">18</div>
<div class="t" style="left:10.65px;top:807.01px;font-size:18.3px;color:#262626;transform:scaleX(0.9200);">19</div>
<div class="t" style="left:10.65px;top:832.01px;font-size:18.3px;color:#262626;transform:scaleX(0.9200);">20</div>
<div class="t" style="left:10.65px;top:857.01px;font-size:18.3px;color:#262626;transform:scaleX(0.9200);">21</div>
<div class="t" style="left:10.65px;top:882.01px;font-size:18.3px;color:#262626;transform:scaleX(0.9200);">22</div>
<div class="t" style="left:10.65px;top:907.01px;font-size:18.3px;color:#262626;transform:scaleX(0.9200);">23</div>
<div class="t" style="left:10.65px;top:932.01px;font-size:18.3px;color:#262626;transform:scaleX(0.9200);">24</div>
<div class="t" style="left:10.65px;top:957.01px;font-size:18.3px;color:#262626;transform:scaleX(0.9200);">25</div>
<div class="t" style="left:10.65px;top:982.01px;font-size:18.3px;color:#262626;transform:scaleX(0.9200);">26</div>
<div class="a" style="left:0;top:0;width:1926px;height:997px;overflow:hidden">
<div class="t" style="left:43.10px;top:355.75px;font-size:19.2px;color:#000;font-weight:bold;transform:scaleX(0.9550);">OZ</div>
<div class="t" style="left:217.00px;top:355.75px;font-size:19.2px;color:#000;font-weight:bold;transform:scaleX(1.0230);">PosArt</div>
<div class="t" style="left:416.00px;top:355.75px;font-size:19.2px;color:#000;font-weight:bold;transform:scaleX(0.9901);">Kurztext</div>
<div class="t" style="left:1396.00px;top:355.75px;font-size:19.2px;color:#000;font-weight:bold;transform:scaleX(1.0230);">Menge</div>
<div class="t" style="left:1519.20px;top:355.75px;font-size:19.2px;color:#000;font-weight:bold;transform:scaleX(1.0230);">Einheit</div>
<div class="t" style="left:1605.00px;top:355.75px;font-size:19.2px;color:#000;font-weight:bold;transform:scaleX(0.9550);">EP</div>
<div class="t" style="left:1691.00px;top:355.75px;font-size:19.2px;color:#000;font-weight:bold;transform:scaleX(0.9550);">GP</div>
<div class="t" style="left:52.50px;top:405.75px;font-size:19.2px;color:#000;font-weight:bold;transform:scaleX(0.9500);">1</div>
<div class="t" style="left:217.00px;top:405.75px;font-size:19.2px;color:#000;font-weight:bold;transform:scaleX(0.9550);">BEREICH</div>
<div class="t" style="left:416.00px;top:405.75px;font-size:19.2px;color:#000;font-weight:bold;transform:scaleX(0.9893);">Bauhauptgewerke</div>
<div class="t" style="left:1802.50px;top:405.75px;font-size:19.2px;color:#000;font-weight:bold;">0,00 €</div>
<div class="t" style="left:52.50px;top:430.75px;font-size:19.2px;color:#000;font-weight:bold;transform:scaleX(0.8200);">1.</div>
<div class="t" style="left:75.50px;top:430.75px;font-size:19.2px;color:#000;font-weight:bold;transform:scaleX(0.9500);">1</div>
<div class="t" style="left:217.00px;top:430.75px;font-size:19.2px;color:#000;font-weight:bold;transform:scaleX(0.9550);">BEREICH</div>
<div class="t" style="left:416.00px;top:430.75px;font-size:19.2px;color:#000;font-weight:bold;transform:scaleX(0.9797);">Baustelleneinrichtung</div>
<div class="t" style="left:1802.50px;top:430.75px;font-size:19.2px;color:#000;font-weight:bold;">0,00 €</div>
<div class="t" style="left:52.00px;top:455.75px;font-size:19.2px;color:#000;font-weight:bold;transform:scaleX(0.8200);">1.</div>
<div class="t" style="left:74.50px;top:455.75px;font-size:19.2px;color:#000;font-weight:bold;transform:scaleX(0.8200);">1.</div>
<div class="t" style="left:96.50px;top:455.75px;font-size:19.2px;color:#000;font-weight:bold;transform:scaleX(0.9500);">10</div>
<div class="t" style="left:217.00px;top:455.75px;font-size:19.2px;color:#000;transform:scaleX(0.9900);">NORMAL</div>
<div class="t" style="left:416.00px;top:455.75px;font-size:19.2px;color:#000;transform:scaleX(1.0770);">Baustelleneinrichtung einrichten, vorhalten, räumen</div>
<div class="t" style="left:1466.00px;top:455.75px;font-size:19.2px;color:#000;transform:scaleX(0.9226);">1,000</div>
<div class="t" style="left:1518.50px;top:455.75px;font-size:19.2px;color:#000;">psch</div>
<div class="t" style="left:1616.70px;top:455.75px;font-size:19.2px;color:#000;transform:scaleX(1.0122);">0,000 €</div>
<div class="t" style="left:1802.00px;top:455.75px;font-size:19.2px;color:#000;transform:scaleX(1.0085);">0,00 €</div>
<div class="t" style="left:52.00px;top:480.75px;font-size:19.2px;color:#000;font-weight:bold;transform:scaleX(0.8200);">1.</div>
<div class="t" style="left:74.50px;top:480.75px;font-size:19.2px;color:#000;font-weight:bold;transform:scaleX(0.8200);">1.</div>
<div class="t" style="left:96.50px;top:480.75px;font-size:19.2px;color:#000;font-weight:bold;transform:scaleX(0.9500);">10.1</div>
<div class="t" style="left:217.00px;top:480.75px;font-size:19.2px;color:#000;transform:scaleX(0.9900);">BEDARF(MIT GB)</div>
<div class="t" style="left:416.00px;top:480.75px;font-size:19.2px;color:#000;transform:scaleX(1.0635);">Betreiben der Wasserhaltungsanlage</div>
<div class="t" style="left:1466.00px;top:480.75px;font-size:19.2px;color:#000;transform:scaleX(0.9226);">1,000</div>
<div class="t" style="left:1518.50px;top:480.75px;font-size:19.2px;color:#000;transform:scaleX(0.9729);">Psch</div>
<div class="t" style="left:1616.70px;top:480.75px;font-size:19.2px;color:#000;transform:scaleX(1.0122);">0,000 €</div>
<div class="t" style="left:1802.00px;top:480.75px;font-size:19.2px;color:#000;transform:scaleX(1.0085);">0,00 €</div>
<div class="t" style="left:52.00px;top:505.75px;font-size:19.2px;color:#000;font-weight:bold;transform:scaleX(0.8200);">1.</div>
<div class="t" style="left:74.50px;top:505.75px;font-size:19.2px;color:#000;font-weight:bold;transform:scaleX(0.8200);">1.</div>
<div class="t" style="left:96.50px;top:505.75px;font-size:19.2px;color:#000;font-weight:bold;transform:scaleX(0.9500);">10.A</div>
<div class="t" style="left:217.00px;top:505.75px;font-size:19.2px;color:#000;transform:scaleX(0.9900);">BEDARF(MIT GB)</div>
<div class="t" style="left:416.00px;top:505.75px;font-size:19.2px;color:#000;transform:scaleX(1.0614);">Betreiben der Wasserhaltungsanlage mit Überwachung</div>
<div class="t" style="left:1466.00px;top:505.75px;font-size:19.2px;color:#000;transform:scaleX(0.9226);">1,000</div>
<div class="t" style="left:1518.50px;top:505.75px;font-size:19.2px;color:#000;transform:scaleX(0.9004);">PSCH</div>
<div class="t" style="left:1616.70px;top:505.75px;font-size:19.2px;color:#000;transform:scaleX(1.0122);">0,000 €</div>
<div class="t" style="left:1802.00px;top:505.75px;font-size:19.2px;color:#000;transform:scaleX(1.0085);">0,00 €</div>
<div class="t" style="left:52.50px;top:530.75px;font-size:19.2px;color:#000;font-weight:bold;transform:scaleX(0.8200);">1.</div>
<div class="t" style="left:75.50px;top:530.75px;font-size:19.2px;color:#000;font-weight:bold;transform:scaleX(0.9500);">2</div>
<div class="t" style="left:217.00px;top:530.75px;font-size:19.2px;color:#000;font-weight:bold;transform:scaleX(0.9550);">BEREICH</div>
<div class="t" style="left:416.00px;top:530.75px;font-size:19.2px;color:#000;font-weight:bold;transform:scaleX(0.9969);">Erdarbeiten</div>
<div class="t" style="left:1802.50px;top:530.75px;font-size:19.2px;color:#000;font-weight:bold;">0,00 €</div>
<div class="t" style="left:52.40px;top:555.75px;font-size:19.2px;color:#000;font-weight:bold;transform:scaleX(0.8200);">1.</div>
<div class="t" style="left:74.50px;top:555.75px;font-size:19.2px;color:#000;font-weight:bold;transform:scaleX(0.8200);">2.</div>
<div class="t" style="left:97.50px;top:555.75px;font-size:19.2px;color:#000;font-weight:bold;transform:scaleX(0.9500);">10</div>
<div class="t" style="left:217.00px;top:555.75px;font-size:19.2px;color:#000;transform:scaleX(0.9900);">NORMAL</div>
<div class="t" style="left:416.00px;top:555.75px;font-size:19.2px;color:#000;transform:scaleX(1.0294);">Boden für Baugrube, BK 3</div>
<div class="t" style="left:1441.80px;top:555.75px;font-size:19.2px;color:#000;transform:scaleX(0.9876);">450,000</div>
<div class="t" style="left:1518.50px;top:555.75px;font-size:19.2px;color:#000;transform:scaleX(0.9829);">m3</div>
<div class="t" style="left:1616.70px;top:555.75px;font-size:19.2px;color:#000;transform:scaleX(1.0122);">0,000 €</div>
<div class="t" style="left:1802.00px;top:555.75px;font-size:19.2px;color:#000;transform:scaleX(1.0085);">0,00 €</div>
<div class="t" style="left:52.40px;top:580.75px;font-size:19.2px;color:#000;font-weight:bold;transform:scaleX(0.8200);">1.</div>
<div class="t" style="left:74.50px;top:580.75px;font-size:19.2px;color:#000;font-weight:bold;transform:scaleX(0.8200);">2.</div>
<div class="t" style="left:97.50px;top:580.75px;font-size:19.2px;color:#000;font-weight:bold;transform:scaleX(0.9500);">20</div>
<div class="t" style="left:217.00px;top:580.75px;font-size:19.2px;color:#000;transform:scaleX(0.9900);">NORMAL</div>
<div class="t" style="left:416.00px;top:580.75px;font-size:19.2px;color:#000;transform:scaleX(1.0273);">Boden Graben Kanal Tiefe bis 1,45 m lösen, lagern Bodenklasse 3</div>
<div class="t" style="left:1427.60px;top:580.75px;font-size:19.2px;color:#000;transform:scaleX(0.9688);">7.200,000</div>
<div class="t" style="left:1518.50px;top:580.75px;font-size:19.2px;color:#000;transform:scaleX(0.9829);">m3</div>
<div class="t" style="left:1616.70px;top:580.75px;font-size:19.2px;color:#000;transform:scaleX(1.0122);">0,000 €</div>
<div class="t" style="left:1802.00px;top:580.75px;font-size:19.2px;color:#000;transform:scaleX(1.0085);">0,00 €</div>
<div class="t" style="left:52.40px;top:605.75px;font-size:19.2px;color:#000;font-weight:bold;transform:scaleX(0.8200);">1.</div>
<div class="t" style="left:74.50px;top:605.75px;font-size:19.2px;color:#000;font-weight:bold;transform:scaleX(0.8200);">2.</div>
<div class="t" style="left:97.50px;top:605.75px;font-size:19.2px;color:#000;font-weight:bold;transform:scaleX(0.9500);">30</div>
<div class="t" style="left:217.00px;top:605.75px;font-size:19.2px;color:#000;transform:scaleX(0.9900);">NORMAL</div>
<div class="t" style="left:416.00px;top:605.75px;font-size:19.2px;color:#000;transform:scaleX(1.0362);">Oberboden abtragen, lagern d= 30 cm Bodengruppe 4</div>
<div class="t" style="left:1445.50px;top:605.75px;font-size:19.2px;color:#000;transform:scaleX(0.9343);">124,000</div>
<div class="t" style="left:1518.50px;top:605.75px;font-size:19.2px;color:#000;transform:scaleX(0.9829);">m2</div>
<div class="t" style="left:1616.70px;top:605.75px;font-size:19.2px;color:#000;transform:scaleX(1.0122);">0,000 €</div>
<div class="t" style="left:1802.00px;top:605.75px;font-size:19.2px;color:#000;transform:scaleX(1.0085);">0,00 €</div>
<div class="t" style="left:52.40px;top:630.75px;font-size:19.2px;color:#000;font-weight:bold;transform:scaleX(0.8200);">1.</div>
<div class="t" style="left:74.50px;top:630.75px;font-size:19.2px;color:#000;font-weight:bold;transform:scaleX(0.8200);">2.</div>
<div class="t" style="left:97.50px;top:630.75px;font-size:19.2px;color:#000;font-weight:bold;transform:scaleX(0.9500);">40</div>
<div class="t" style="left:217.00px;top:630.75px;font-size:19.2px;color:#000;transform:scaleX(0.9147);">GRUNDPOS(1.0)</div>
<div class="t" style="left:416.00px;top:630.75px;font-size:19.2px;color:#000;transform:scaleX(1.0391);">Betonpflaster L/B 100/100 mm H 80 mm  grau</div>
<div class="t" style="left:1429.30px;top:630.75px;font-size:19.2px;color:#000;transform:scaleX(0.9489);">1.245,000</div>
<div class="t" style="left:1518.50px;top:630.75px;font-size:19.2px;color:#000;transform:scaleX(0.9829);">m2</div>
<div class="t" style="left:1616.70px;top:630.75px;font-size:19.2px;color:#000;transform:scaleX(1.0122);">0,000 €</div>
<div class="t" style="left:1802.00px;top:630.75px;font-size:19.2px;color:#000;transform:scaleX(1.0085);">0,00 €</div>
<div class="t" style="left:52.40px;top:655.75px;font-size:19.2px;color:#000;font-weight:bold;transform:scaleX(0.8200);">1.</div>
<div class="t" style="left:74.50px;top:655.75px;font-size:19.2px;color:#000;font-weight:bold;transform:scaleX(0.8200);">2.</div>
<div class="t" style="left:97.50px;top:655.75px;font-size:19.2px;color:#000;font-weight:bold;transform:scaleX(0.9500);">50</div>
<div class="t" style="left:217.00px;top:655.75px;font-size:19.2px;color:#000;transform:scaleX(0.9194);">WAHLPOS(1.1 zu 1.0)</div>
<div class="t" style="left:416.00px;top:655.75px;font-size:19.2px;color:#000;transform:scaleX(1.0366);">Betonpflaster L/B 100/100 mm H 80 mm  in BVBS-blau</div>
<div class="t" style="left:1429.30px;top:655.75px;font-size:19.2px;color:#000;transform:scaleX(0.9489);">1.245,000</div>
<div class="t" style="left:1518.50px;top:655.75px;font-size:19.2px;color:#000;transform:scaleX(0.9829);">m2</div>
<div class="t" style="left:1616.70px;top:655.75px;font-size:19.2px;color:#000;transform:scaleX(1.0122);">0,000 €</div>
<div class="t" style="left:1690.30px;top:655.75px;font-size:19.2px;color:#000;transform:scaleX(1.0109);">nur EP</div>
<div class="t" style="left:52.50px;top:680.75px;font-size:19.2px;color:#000;font-weight:bold;transform:scaleX(0.8200);">1.</div>
<div class="t" style="left:75.50px;top:680.75px;font-size:19.2px;color:#000;font-weight:bold;transform:scaleX(0.9500);">3</div>
<div class="t" style="left:217.00px;top:680.75px;font-size:19.2px;color:#000;font-weight:bold;transform:scaleX(0.9550);">BEREICH</div>
<div class="t" style="left:416.00px;top:680.75px;font-size:19.2px;color:#000;font-weight:bold;transform:scaleX(1.0186);">Maurerarbeiten</div>
<div class="t" style="left:1802.50px;top:680.75px;font-size:19.2px;color:#000;font-weight:bold;">0,00 €</div>
<div class="t" style="left:52.40px;top:705.75px;font-size:19.2px;color:#000;font-weight:bold;transform:scaleX(0.8200);">1.</div>
<div class="t" style="left:74.50px;top:705.75px;font-size:19.2px;color:#000;font-weight:bold;transform:scaleX(0.8200);">3.</div>
<div class="t" style="left:97.50px;top:705.75px;font-size:19.2px;color:#000;font-weight:bold;transform:scaleX(0.9500);">10</div>
<div class="t" style="left:217.00px;top:705.75px;font-size:19.2px;color:#000;transform:scaleX(0.9900);">NORMAL</div>
<div class="t" style="left:416.00px;top:705.75px;font-size:19.2px;color:#000;transform:scaleX(1.0046);">Kalksandstein-Innenwand KS-R SFK 20 RDK 1,8 D 11,5cm</div>
<div class="t" style="left:1441.80px;top:705.75px;font-size:19.2px;color:#000;transform:scaleX(0.9876);">440,000</div>
<div class="t" style="left:1518.50px;top:705.75px;font-size:19.2px;color:#000;transform:scaleX(0.9829);">m2</div>
<div class="t" style="left:1616.70px;top:705.75px;font-size:19.2px;color:#000;transform:scaleX(1.0122);">0,000 €</div>
<div class="t" style="left:1802.00px;top:705.75px;font-size:19.2px;color:#000;transform:scaleX(1.0085);">0,00 €</div>
<div class="t" style="left:52.40px;top:730.75px;font-size:19.2px;color:#000;font-weight:bold;transform:scaleX(0.8200);">1.</div>
<div class="t" style="left:74.50px;top:730.75px;font-size:19.2px;color:#000;font-weight:bold;transform:scaleX(0.8200);">3.</div>
<div class="t" style="left:97.50px;top:730.75px;font-size:19.2px;color:#000;font-weight:bold;transform:scaleX(0.9500);">20</div>
<div class="t" style="left:217.00px;top:730.75px;font-size:19.2px;color:#000;transform:scaleX(0.9900);">NORMAL</div>
<div class="t" style="left:416.00px;top:730.75px;font-size:19.2px;color:#000;transform:scaleX(1.0071);">Kalksandstein-Innenwand KS-R SFK 20 RDK 1,8 D 17,5cm</div>
<div class="t" style="left:1441.80px;top:730.75px;font-size:19.2px;color:#000;transform:scaleX(0.9876);">350,000</div>
<div class="t" style="left:1518.50px;top:730.75px;font-size:19.2px;color:#000;transform:scaleX(0.9829);">m2</div>
<div class="t" style="left:1616.70px;top:730.75px;font-size:19.2px;color:#000;transform:scaleX(1.0122);">0,000 €</div>
<div class="t" style="left:1802.00px;top:730.75px;font-size:19.2px;color:#000;transform:scaleX(1.0085);">0,00 €</div>
<div class="t" style="left:52.40px;top:755.75px;font-size:19.2px;color:#000;font-weight:bold;transform:scaleX(0.8200);">1.</div>
<div class="t" style="left:74.50px;top:755.75px;font-size:19.2px;color:#000;font-weight:bold;transform:scaleX(0.8200);">3.</div>
<div class="t" style="left:97.50px;top:755.75px;font-size:19.2px;color:#000;font-weight:bold;transform:scaleX(0.9500);">30</div>
<div class="t" style="left:217.00px;top:755.75px;font-size:19.2px;color:#000;transform:scaleX(0.9900);">NORMAL</div>
<div class="t" style="left:416.00px;top:755.75px;font-size:19.2px;color:#000;transform:scaleX(1.0264);">Außenwand Porenbeton-Planelement SFK 4 D 36,5cm 0,15W/(mK)</div>
<div class="t" style="left:1441.80px;top:755.75px;font-size:19.2px;color:#000;transform:scaleX(0.9876);">750,000</div>
<div class="t" style="left:1518.50px;top:755.75px;font-size:19.2px;color:#000;transform:scaleX(0.9829);">m3</div>
<div class="t" style="left:1616.70px;top:755.75px;font-size:19.2px;color:#000;transform:scaleX(1.0122);">0,000 €</div>
<div class="t" style="left:1802.00px;top:755.75px;font-size:19.2px;color:#000;transform:scaleX(1.0085);">0,00 €</div>
<div class="t" style="left:52.40px;top:780.75px;font-size:19.2px;color:#000;font-weight:bold;transform:scaleX(0.8200);">1.</div>
<div class="t" style="left:74.50px;top:780.75px;font-size:19.2px;color:#000;font-weight:bold;transform:scaleX(0.8200);">3.</div>
<div class="t" style="left:97.50px;top:780.75px;font-size:19.2px;color:#000;font-weight:bold;transform:scaleX(0.9500);">40</div>
<div class="t" style="left:217.00px;top:780.75px;font-size:19.2px;color:#000;transform:scaleX(0.9900);">NORMAL</div>
<div class="t" style="left:416.00px;top:780.75px;font-size:19.2px;color:#000;transform:scaleX(0.9765);">Außenwand VHLz SFK 28 RDK 1,6 D 36,5cm</div>
<div class="t" style="left:1441.80px;top:780.75px;font-size:19.2px;color:#000;transform:scaleX(0.9876);">783,030</div>
<div class="t" style="left:1518.50px;top:780.75px;font-size:19.2px;color:#000;transform:scaleX(0.9829);">m3</div>
<div class="t" style="left:1616.70px;top:780.75px;font-size:19.2px;color:#000;transform:scaleX(1.0122);">0,000 €</div>
<div class="t" style="left:1802.00px;top:780.75px;font-size:19.2px;color:#000;transform:scaleX(1.0085);">0,00 €</div>
<div class="t" style="left:52.50px;top:805.75px;font-size:19.2px;color:#000;font-weight:bold;transform:scaleX(0.8200);">1.</div>
<div class="t" style="left:75.50px;top:805.75px;font-size:19.2px;color:#000;font-weight:bold;transform:scaleX(0.9500);">4</div>
<div class="t" style="left:217.00px;top:805.75px;font-size:19.2px;color:#000;font-weight:bold;transform:scaleX(0.9550);">BEREICH</div>
<div class="t" style="left:416.00px;top:805.75px;font-size:19.2px;color:#000;font-weight:bold;transform:scaleX(0.9891);">Betonarbeiten</div>
<div class="t" style="left:1802.50px;top:805.75px;font-size:19.2px;color:#000;font-weight:bold;">0,00 €</div>
<div class="t" style="left:52.40px;top:830.75px;font-size:19.2px;color:#000;font-weight:bold;transform:scaleX(0.8200);">1.</div>
<div class="t" style="left:74.50px;top:830.75px;font-size:19.2px;color:#000;font-weight:bold;transform:scaleX(0.8200);">4.</div>
<div class="t" style="left:97.50px;top:830.75px;font-size:19.2px;color:#000;font-weight:bold;transform:scaleX(0.9500);">10</div>
<div class="t" style="left:217.00px;top:830.75px;font-size:19.2px;color:#000;transform:scaleX(0.9900);">NORMAL</div>
<div class="t" style="left:416.00px;top:830.75px;font-size:19.2px;color:#000;transform:scaleX(1.0511);">Schalung Deckenplatte GF-Schalungsplatten H 2-3m</div>
<div class="t" style="left:1441.80px;top:830.75px;font-size:19.2px;color:#000;transform:scaleX(0.9876);">500,000</div>
<div class="t" style="left:1518.50px;top:830.75px;font-size:19.2px;color:#000;transform:scaleX(0.9829);">m2</div>
<div class="t" style="left:1616.70px;top:830.75px;font-size:19.2px;color:#000;transform:scaleX(1.0122);">0,000 €</div>
<div class="t" style="left:1802.00px;top:830.75px;font-size:19.2px;color:#000;transform:scaleX(1.0085);">0,00 €</div>
<div class="t" style="left:52.40px;top:855.75px;font-size:19.2px;color:#000;font-weight:bold;transform:scaleX(0.8200);">1.</div>
<div class="t" style="left:74.50px;top:855.75px;font-size:19.2px;color:#000;font-weight:bold;transform:scaleX(0.8200);">4.</div>
<div class="t" style="left:97.50px;top:855.75px;font-size:19.2px;color:#000;font-weight:bold;transform:scaleX(0.9500);">20</div>
<div class="t" style="left:217.00px;top:855.75px;font-size:19.2px;color:#000;transform:scaleX(0.9900);">NORMAL</div>
<div class="t" style="left:416.00px;top:855.75px;font-size:19.2px;color:#000;transform:scaleX(1.0388);">Ortbeton Deckenplatte Stahlbeton C20/25 D 20cm</div>
<div class="t" style="left:1441.80px;top:855.75px;font-size:19.2px;color:#000;transform:scaleX(0.9876);">500,000</div>
<div class="t" style="left:1518.50px;top:855.75px;font-size:19.2px;color:#000;transform:scaleX(0.9829);">m2</div>
<div class="t" style="left:1616.70px;top:855.75px;font-size:19.2px;color:#000;transform:scaleX(1.0122);">0,000 €</div>
<div class="t" style="left:1802.00px;top:855.75px;font-size:19.2px;color:#000;transform:scaleX(1.0085);">0,00 €</div>
<div class="t" style="left:52.40px;top:880.75px;font-size:19.2px;color:#000;font-weight:bold;transform:scaleX(0.8200);">1.</div>
<div class="t" style="left:74.50px;top:880.75px;font-size:19.2px;color:#000;font-weight:bold;transform:scaleX(0.8200);">4.</div>
<div class="t" style="left:97.50px;top:880.75px;font-size:19.2px;color:#000;font-weight:bold;transform:scaleX(0.9500);">30</div>
<div class="t" style="left:217.00px;top:880.75px;font-size:19.2px;color:#000;transform:scaleX(0.9900);">NORMAL</div>
<div class="t" style="left:416.00px;top:880.75px;font-size:19.2px;color:#000;transform:scaleX(1.0308);">Ortbeton Außenwand D 24cm Stahlbeton C35/45</div>
<div class="t" style="left:1441.80px;top:880.75px;font-size:19.2px;color:#000;transform:scaleX(0.9876);">267,000</div>
<div class="t" style="left:1518.50px;top:880.75px;font-size:19.2px;color:#000;transform:scaleX(0.9829);">m3</div>
<div class="t" style="left:1616.70px;top:880.75px;font-size:19.2px;color:#000;transform:scaleX(1.0122);">0,000 €</div>
<div class="t" style="left:1802.00px;top:880.75px;font-size:19.2px;color:#000;transform:scaleX(1.0085);">0,00 €</div>
<div class="t" style="left:53.00px;top:905.75px;font-size:19.2px;color:#000;font-weight:bold;transform:scaleX(0.9500);">2</div>
<div class="t" style="left:217.00px;top:905.75px;font-size:19.2px;color:#000;font-weight:bold;transform:scaleX(0.9550);">BEREICH</div>
<div class="t" style="left:416.00px;top:905.75px;font-size:19.2px;color:#000;font-weight:bold;transform:scaleX(0.9838);">Baunebengewerke</div>
<div class="t" style="left:1802.50px;top:905.75px;font-size:19.2px;color:#000;font-weight:bold;">0,00 €</div>
<div class="t" style="left:53.00px;top:930.75px;font-size:19.2px;color:#000;font-weight:bold;transform:scaleX(0.8200);">2.</div>
<div class="t" style="left:78.00px;top:930.75px;font-size:19.2px;color:#000;font-weight:bold;transform:scaleX(0.9500);">0</div>
<div class="t" style="left:217.00px;top:930.75px;font-size:19.2px;color:#000;font-weight:bold;transform:scaleX(0.9550);">BEREICH</div>
<div class="t" style="left:416.00px;top:930.75px;font-size:19.2px;color:#000;font-weight:bold;transform:scaleX(0.9877);">Baunebengewerk Titel 0</div>
<div class="t" style="left:1802.50px;top:930.75px;font-size:19.2px;color:#000;font-weight:bold;">0,00 €</div>
<div class="t" style="left:53.00px;top:955.75px;font-size:19.2px;color:#000;font-weight:bold;transform:scaleX(0.8200);">2.</div>
<div class="t" style="left:78.00px;top:955.75px;font-size:19.2px;color:#000;font-weight:bold;transform:scaleX(0.8200);">0.</div>
<div class="t" style="left:109.00px;top:955.75px;font-size:19.2px;color:#000;font-weight:bold;transform:scaleX(0.9500);">0</div>
<div class="t" style="left:217.00px;top:955.75px;font-size:19.2px;color:#000;transform:scaleX(0.9900);">NORMAL</div>
<div class="t" style="left:416.00px;top:955.75px;font-size:19.2px;color:#000;transform:scaleX(1.0417);">Baunebengewerk Position 0</div>
<div class="t" style="left:1466.00px;top:955.75px;font-size:19.2px;color:#000;transform:scaleX(0.9226);">1,000</div>
<div class="t" style="left:1518.50px;top:955.75px;font-size:19.2px;color:#000;transform:scaleX(1.0183);">Stck</div>
<div class="t" style="left:1616.70px;top:955.75px;font-size:19.2px;color:#000;transform:scaleX(1.0122);">0,000 €</div>
<div class="t" style="left:1802.00px;top:955.75px;font-size:19.2px;color:#000;transform:scaleX(1.0085);">0,00 €</div>
<div class="t" style="left:53.00px;top:980.75px;font-size:19.2px;color:#000;font-weight:bold;transform:scaleX(0.8200);">2.</div>
<div class="t" style="left:77.50px;top:980.75px;font-size:19.2px;color:#000;font-weight:bold;transform:scaleX(0.9500);">1</div>
<div class="t" style="left:217.00px;top:980.75px;font-size:19.2px;color:#000;font-weight:bold;transform:scaleX(0.9550);">BEREICH</div>
<div class="t" style="left:416.00px;top:980.75px;font-size:19.2px;color:#000;font-weight:bold;transform:scaleX(1.0108);">Elektroarbeiten</div>
<div class="t" style="left:1802.50px;top:980.75px;font-size:19.2px;color:#000;font-weight:bold;">0.00 €</div>
</div>
<svg style="left:36px;top:1012px" width="12" height="16" viewBox="0 0 12 16"><path d="M10 1L2 8l8 7" fill="none" stroke="#8C8C8C" stroke-width="1.5"/></svg>
<svg style="left:85px;top:1012px" width="12" height="16" viewBox="0 0 12 16"><path d="M2 1l8 7-8 7" fill="none" stroke="#8C8C8C" stroke-width="1.5"/></svg>
<div class="a" style="left:167px;top:997px;width:49px;height:42px;background:#fff;border-radius:0 0 7px 7px;box-shadow:0 0 0 0.6px rgba(0,0,0,0.08),0 1px 1.5px rgba(0,0,0,0.12)"></div>
<div class="t" style="left:180.70px;top:1007.65px;font-size:20.5px;color:#242424;transform:scaleX(0.9638);">LV</div>
<div class="a" style="left:180px;top:1032px;width:24px;height:3px;background:#107C41"></div>
<div class="a" style="left:222px;top:1007px;width:1px;height:28px;background:#C8C8C8"></div>
<div class="t" style="left:243.50px;top:1012.65px;font-size:20.5px;color:#242424;transform:scaleX(1.0242);">Summenblatt</div>
<div class="a" style="left:388px;top:1007px;width:1px;height:28px;background:#C8C8C8"></div>
<svg style="left:451px;top:1012px" width="18" height="17" viewBox="0 0 18 17"><path d="M9 0.5v16M1 8.5h16" stroke="#424242" stroke-width="1.6"/></svg>
<div class="a" style="left:1154.5px;top:1013px;width:3.5px;height:3.5px;background:#424242"></div><div class="a" style="left:1154.5px;top:1019.5px;width:3.5px;height:3.5px;background:#424242"></div><div class="a" style="left:1154.5px;top:1026px;width:3.5px;height:3.5px;background:#424242"></div>
<div class="a" style="left:1181px;top:1007px;width:709px;height:27px;border-radius:14px;background:#F6F6F6"></div>
<svg style="left:1188px;top:1013px" width="12" height="14" viewBox="0 0 12 14"><path d="M11 0.5v13L0.5 7z" fill="#737373"/></svg>
<div class="a" style="left:1206px;top:1013px;width:389px;height:13px;border-radius:7px;background:#737373"></div>
<svg style="left:1871px;top:1013px" width="12" height="14" viewBox="0 0 12 14"><path d="M0.5 0.5v13L11 7z" fill="#737373"/></svg>
<div class="a" style="left:1889px;top:326px;width:27px;height:674px;border-radius:14px;background:#F6F6F6"></div>
<svg style="left:1896px;top:334px" width="14" height="10" viewBox="0 0 14 10"><path d="M0.5 9.5h13L7 0.5z" fill="#737373"/></svg>
<div class="a" style="left:1897px;top:352px;width:12px;height:26px;border-radius:6px;background:#737373"></div>
<svg style="left:1896px;top:982px" width="14" height="10" viewBox="0 0 14 10"><path d="M0.5 0.5h13L7 9.5z" fill="#737373"/></svg>
<div class="a" style="left:2px;top:1045px;width:1916px;height:1px;background:#D4D4D4"></div>
<div class="a" style="left:2px;top:1046px;width:1916px;height:32px;background:#F3F3F3"></div>
<div class="t" style="left:18.70px;top:1056.05px;font-size:15.3px;color:#3A3A3A;transform:scaleX(0.9810);">Bereit</div>
<svg style="left:86px;top:1052px" width="23" height="21" viewBox="0 0 23 21">
<path d="M1 19.5V1h20.5v6" fill="none" stroke="#3A3A3A" stroke-width="1.7"/><path d="M1 4.5h20.5" stroke="#3A3A3A" stroke-width="1.5"/>
<path d="M1 19.5h8M4 8h6M4 11.5h5M4 15h4" stroke="#3A3A3A" stroke-width="1.4"/>
<circle cx="15.5" cy="14" r="6" fill="#F3F3F3" stroke="#3A3A3A" stroke-width="1.7"/><circle cx="15.5" cy="14" r="2.6" fill="#3A3A3A"/>
</svg>
<svg style="left:130px;top:1048px" width="28" height="26" viewBox="0 0 28 26">
<circle cx="12.5" cy="6.8" r="2.7" fill="none" stroke="#3A3A3A" stroke-width="1.6"/>
<path d="M9.8 9.3C8 9 6.5 8.2 5 8.3c-1.6 0.2-1.8 2.4-0.3 2.9l3.8 1.1v3.6l-1.6 6c-0.5 2.3 1.5 2.6 3.2 1.4" fill="none" stroke="#3A3A3A" stroke-width="1.6" stroke-linecap="round"/>
<path d="M15.2 9.3C17 9 18.5 8.2 20 8.3c1.6 0.2 1.8 2.4 0.3 2.9l-3.8 1.1v3.4" fill="none" stroke="#3A3A3A" stroke-width="1.6" stroke-linecap="round"/>
<path d="M12.9 19.2l4.6 4.5 7.9-7.7" fill="none" stroke="#3A3A3A" stroke-width="1.7"/>
</svg>
<div class="t" style="left:160.70px;top:1056.05px;font-size:15.3px;color:#3A3A3A;transform:scaleX(1.0043);">Barrierefreiheit: Keine Probleme</div>
<div class="a" style="left:1452px;top:1046px;width:60px;height:32px;background:#E0E0E0"></div>
<svg style="left:1471px;top:1051px" width="21" height="21" viewBox="0 0 21 21">
<path d="M1 1h19v19H1zM7.33 1v19M13.67 1v19M1 7.33h19M1 13.67h19" fill="none" stroke="#3A3A3A" stroke-width="1.8"/>
</svg>
<svg style="left:1531px;top:1051px" width="23" height="21" viewBox="0 0 23 21">
<rect x="1" y="1" width="20.5" height="19" fill="none" stroke="#3A3A3A" stroke-width="1.6"/>
<rect x="5" y="4.5" width="12.5" height="12" fill="none" stroke="#3A3A3A" stroke-width="1.4"/>
<path d="M7.5 8h7.5M7.5 10.5h7.5M7.5 13h7.5" stroke="#3A3A3A" stroke-width="1.3"/>
</svg>
<svg style="left:1591px;top:1051px" width="23" height="21" viewBox="0 0 23 21">
<rect x="1" y="1" width="20.5" height="19" fill="none" stroke="#3A3A3A" stroke-width="1.6"/>
<path d="M1 11.7H13.7V1M7.2 1V11.7" fill="none" stroke="#3A3A3A" stroke-width="1.6"/>
</svg>
<div class="a" style="left:1640px;top:1061px;width:12px;height:1.3px;background:#5A5A5A"></div>
<div class="a" style="left:1660px;top:1061px;width:148px;height:1.6px;background:#6A6A6A"></div>
<div class="a" style="left:1723px;top:1053px;width:8px;height:17px;border-radius:1px;background:#5E5E5E"></div>
<div class="a" style="left:1734px;top:1057px;width:1.5px;height:9px;background:#6A6A6A"></div>
<svg style="left:1815px;top:1055px" width="14" height="14" viewBox="0 0 14 14"><path d="M7 0.5v13M0.8 7h12.4" stroke="#3A3A3A" stroke-width="1.5"/></svg>
<div class="t" style="left:1846.00px;top:1055.03px;font-size:16.5px;color:#3A3A3A;transform:scaleX(0.9227);">90 %</div>
</body></html>
